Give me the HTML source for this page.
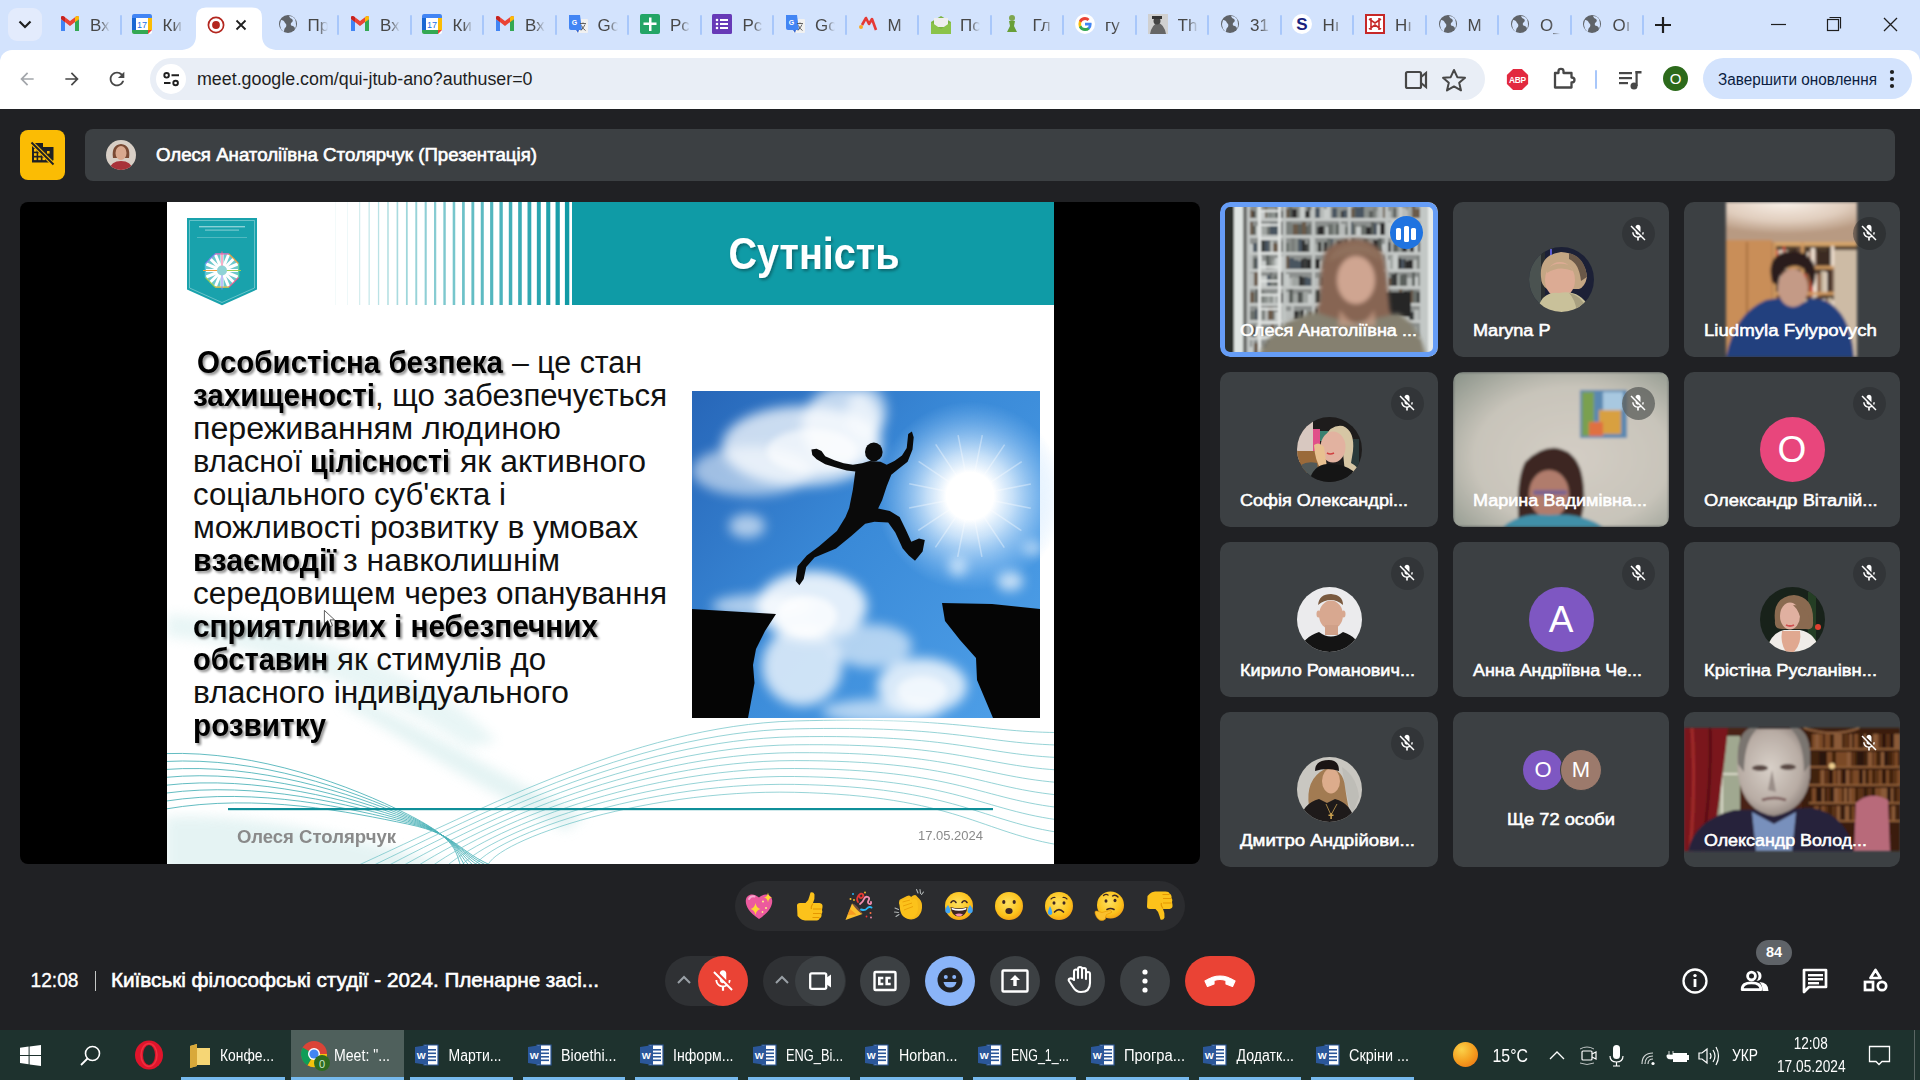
<!DOCTYPE html><html><head><meta charset="utf-8"><style>
*{margin:0;padding:0;box-sizing:border-box}
html,body{width:1920px;height:1080px;overflow:hidden;background:#202124;font-family:"Liberation Sans",sans-serif}
.a{position:absolute}
svg{position:absolute;overflow:visible}
</style></head><body>
<div class="a" style="left:0;top:0;width:1920px;height:64px;background:#d3e3fd"></div>
<div class="a" style="left:8px;top:8px;width:34px;height:33px;border-radius:9px;background:#e3ebfc"></div>
<svg style="left:0;top:0" width="50" height="50"><path d="M19.5 21.5 L25 27 L30.5 21.5" fill="none" stroke="#1f1f1f" stroke-width="2.2"/></svg>
<svg style="left:60px;top:15px" width="20" height="18" viewBox="0 0 20 18"><path d="M1 4 V16 H5 V7 Z" fill="#4285f4"/><path d="M15 7 V16 H19 V4 Z" fill="#34a853"/><path d="M1 4 L10 11 L19 4 L19 2 Q18 0.5 16 1.5 L10 6 L4 1.5 Q2 0.5 1 2 Z" fill="#ea4335"/><path d="M15 7 L19 4 V2 Q18 0.5 16 1.5 L15 2.3Z" fill="#fbbc04"/><path d="M1 4 L5 7 V2.3 L4 1.5 Q2 .5 1 2Z" fill="#c5221f"/></svg>
<div class="a" style="left:90.0px;top:13px;width:20px;height:26px;overflow:hidden;font-size:17px;line-height:26px;color:#474747;-webkit-mask-image:linear-gradient(90deg,#000 50%,transparent);white-space:nowrap">Вх</div>
<svg style="left:132px;top:14px" width="20" height="20" viewBox="0 0 20 20"><rect x="0" y="0" width="20" height="20" rx="2" fill="#fff"/><path d="M0 2 Q0 0 2 0 H18 Q20 0 20 2 V4 H0Z" fill="#4285f4"/><path d="M0 16 H16 V20 H2 Q0 20 0 18Z" fill="#34a853"/><path d="M16 4 H20 V16 H16Z" fill="#fbbc04"/><path d="M16 16 H20 L16 20Z" fill="#ea4335"/><path d="M0 4 H4 V16 H0Z" fill="#1967d2"/><text x="10" y="13.5" font-size="9" text-anchor="middle" fill="#1a73e8" font-family="Liberation Sans">17</text></svg>
<div class="a" style="left:162.5px;top:13px;width:20px;height:26px;overflow:hidden;font-size:17px;line-height:26px;color:#474747;-webkit-mask-image:linear-gradient(90deg,#000 50%,transparent);white-space:nowrap">Ки</div>
<svg style="left:278px;top:14px" width="20" height="20" viewBox="0 0 20 20"><circle cx="10" cy="10" r="9" fill="#5f6368"/><path d="M3 6 Q6 6 7 9 Q9 10 8 13 Q6 14 6 18 Q2 15 2 10Z M11 2 Q12 5 14 5 Q16 7 13 9 Q12 12 15 12 Q17 13 17 15 Q19 11 17 5 Q15 2 11 2Z" fill="#d3e3fd"/></svg>
<div class="a" style="left:307.5px;top:13px;width:20px;height:26px;overflow:hidden;font-size:17px;line-height:26px;color:#474747;-webkit-mask-image:linear-gradient(90deg,#000 50%,transparent);white-space:nowrap">Пр</div>
<svg style="left:350px;top:15px" width="20" height="18" viewBox="0 0 20 18"><path d="M1 4 V16 H5 V7 Z" fill="#4285f4"/><path d="M15 7 V16 H19 V4 Z" fill="#34a853"/><path d="M1 4 L10 11 L19 4 L19 2 Q18 0.5 16 1.5 L10 6 L4 1.5 Q2 0.5 1 2 Z" fill="#ea4335"/><path d="M15 7 L19 4 V2 Q18 0.5 16 1.5 L15 2.3Z" fill="#fbbc04"/><path d="M1 4 L5 7 V2.3 L4 1.5 Q2 .5 1 2Z" fill="#c5221f"/></svg>
<div class="a" style="left:380.0px;top:13px;width:20px;height:26px;overflow:hidden;font-size:17px;line-height:26px;color:#474747;-webkit-mask-image:linear-gradient(90deg,#000 50%,transparent);white-space:nowrap">Вх</div>
<svg style="left:422px;top:14px" width="20" height="20" viewBox="0 0 20 20"><rect x="0" y="0" width="20" height="20" rx="2" fill="#fff"/><path d="M0 2 Q0 0 2 0 H18 Q20 0 20 2 V4 H0Z" fill="#4285f4"/><path d="M0 16 H16 V20 H2 Q0 20 0 18Z" fill="#34a853"/><path d="M16 4 H20 V16 H16Z" fill="#fbbc04"/><path d="M16 16 H20 L16 20Z" fill="#ea4335"/><path d="M0 4 H4 V16 H0Z" fill="#1967d2"/><text x="10" y="13.5" font-size="9" text-anchor="middle" fill="#1a73e8" font-family="Liberation Sans">17</text></svg>
<div class="a" style="left:452.5px;top:13px;width:20px;height:26px;overflow:hidden;font-size:17px;line-height:26px;color:#474747;-webkit-mask-image:linear-gradient(90deg,#000 50%,transparent);white-space:nowrap">Ки</div>
<svg style="left:495px;top:15px" width="20" height="18" viewBox="0 0 20 18"><path d="M1 4 V16 H5 V7 Z" fill="#4285f4"/><path d="M15 7 V16 H19 V4 Z" fill="#34a853"/><path d="M1 4 L10 11 L19 4 L19 2 Q18 0.5 16 1.5 L10 6 L4 1.5 Q2 0.5 1 2 Z" fill="#ea4335"/><path d="M15 7 L19 4 V2 Q18 0.5 16 1.5 L15 2.3Z" fill="#fbbc04"/><path d="M1 4 L5 7 V2.3 L4 1.5 Q2 .5 1 2Z" fill="#c5221f"/></svg>
<div class="a" style="left:525.0px;top:13px;width:20px;height:26px;overflow:hidden;font-size:17px;line-height:26px;color:#474747;-webkit-mask-image:linear-gradient(90deg,#000 50%,transparent);white-space:nowrap">Вх</div>
<svg style="left:568px;top:14px" width="20" height="20" viewBox="0 0 20 20"><rect x="8" y="5" width="12" height="14" rx="1" fill="#f1f1f1"/><path d="M1 1 H12 L14 16 H3 Q1 16 1 14Z" fill="#4285f4"/><path d="M8 16 L10 19 L11 16Z" fill="#3367d6"/><text x="6.5" y="11" font-size="7" font-weight="bold" fill="#fff" text-anchor="middle" font-family="Liberation Sans">G</text><path d="M12 9.5 H18 M15 8.5 V10 M13 16.5 Q16 13 17 10.5 M13.5 11.5 Q15 15 17.5 16.5" stroke="#555" stroke-width="0.9" fill="none"/></svg>
<div class="a" style="left:597.5px;top:13px;width:20px;height:26px;overflow:hidden;font-size:17px;line-height:26px;color:#474747;-webkit-mask-image:linear-gradient(90deg,#000 50%,transparent);white-space:nowrap">Gc</div>
<svg style="left:640px;top:14px" width="20" height="20" viewBox="0 0 20 20"><rect x="0" y="0" width="20" height="20" rx="2" fill="#23a566"/><path d="M9 3.5 H11.5 V8.5 H16.5 V11 H11.5 V17 H9 V11 H3.5 V8.5 H9Z" fill="#fff"/></svg>
<div class="a" style="left:670.0px;top:13px;width:20px;height:26px;overflow:hidden;font-size:17px;line-height:26px;color:#474747;-webkit-mask-image:linear-gradient(90deg,#000 50%,transparent);white-space:nowrap">Pc</div>
<svg style="left:712px;top:14px" width="20" height="20" viewBox="0 0 20 20"><rect x="0" y="0" width="20" height="20" rx="1.5" fill="#673ab7"/><g fill="#fff"><circle cx="5" cy="6" r="1.3"/><circle cx="5" cy="10" r="1.3"/><circle cx="5" cy="14" r="1.3"/><rect x="8" y="5" width="8" height="2"/><rect x="8" y="9" width="8" height="2"/><rect x="8" y="13" width="8" height="2"/></g></svg>
<div class="a" style="left:742.5px;top:13px;width:20px;height:26px;overflow:hidden;font-size:17px;line-height:26px;color:#474747;-webkit-mask-image:linear-gradient(90deg,#000 50%,transparent);white-space:nowrap">Pc</div>
<svg style="left:785px;top:14px" width="20" height="20" viewBox="0 0 20 20"><rect x="8" y="5" width="12" height="14" rx="1" fill="#f1f1f1"/><path d="M1 1 H12 L14 16 H3 Q1 16 1 14Z" fill="#4285f4"/><path d="M8 16 L10 19 L11 16Z" fill="#3367d6"/><text x="6.5" y="11" font-size="7" font-weight="bold" fill="#fff" text-anchor="middle" font-family="Liberation Sans">G</text><path d="M12 9.5 H18 M15 8.5 V10 M13 16.5 Q16 13 17 10.5 M13.5 11.5 Q15 15 17.5 16.5" stroke="#555" stroke-width="0.9" fill="none"/></svg>
<div class="a" style="left:815.0px;top:13px;width:20px;height:26px;overflow:hidden;font-size:17px;line-height:26px;color:#474747;-webkit-mask-image:linear-gradient(90deg,#000 50%,transparent);white-space:nowrap">Gc</div>
<svg style="left:858px;top:14px" width="20" height="20" viewBox="0 0 20 20"><circle cx="3" cy="13" r="2" fill="#f9a825"/><path d="M4 11 L8 4 L11 10 L14 5 L18 16" fill="none" stroke="#e53935" stroke-width="2.6" stroke-linejoin="round"/></svg>
<div class="a" style="left:887.5px;top:13px;width:20px;height:26px;overflow:hidden;font-size:17px;line-height:26px;color:#474747;-webkit-mask-image:linear-gradient(90deg,#000 50%,transparent);white-space:nowrap">M</div>
<svg style="left:930px;top:14px" width="22" height="22" viewBox="0 0 22 22"><path d="M1 8 L11 2 L21 8 V20 H1Z" fill="#7cb342"/><rect x="4" y="4" width="14" height="9" fill="#eee"/><path d="M1 8 L11 15 L21 8 V20 H1Z" fill="#8bc34a"/></svg>
<div class="a" style="left:960.0px;top:13px;width:20px;height:26px;overflow:hidden;font-size:17px;line-height:26px;color:#474747;-webkit-mask-image:linear-gradient(90deg,#000 50%,transparent);white-space:nowrap">Пс</div>
<svg style="left:1002px;top:14px" width="20" height="20" viewBox="0 0 20 20"><circle cx="10" cy="4" r="3" fill="#7fa650"/><path d="M7 7 H13 L12 12 L15 18 H5 L8 12Z" fill="#689f38"/></svg>
<div class="a" style="left:1032.5px;top:13px;width:20px;height:26px;overflow:hidden;font-size:17px;line-height:26px;color:#474747;-webkit-mask-image:linear-gradient(90deg,#000 50%,transparent);white-space:nowrap">Гл</div>
<svg style="left:1075px;top:14px" width="20" height="20" viewBox="0 0 20 20"><circle cx="10" cy="10" r="10" fill="#fff"/><g transform="translate(2.2 2.2) scale(0.78)"><path d="M18.5 10.2 Q18.5 9.3 18.3 8.5 H10 V11.8 H14.8 Q14.5 13.4 13.1 14.4 V16.6 H16 Q18.5 14.3 18.5 10.2Z" fill="#4285f4"/><path d="M10 19 Q13.7 19 16 16.6 L13.1 14.4 Q11.9 15.2 10 15.2 Q6.5 15.2 5.2 11.9 H2.3 V14.2 Q4.6 19 10 19Z" fill="#34a853"/><path d="M5.2 11.9 Q4.8 10 5.2 8.1 V5.8 H2.3 Q0.8 10 2.3 14.2Z" fill="#fbbc05"/><path d="M10 4.8 Q11.8 4.8 13.2 6.1 L15.8 3.5 Q13.5 1 10 1 Q4.6 1 2.3 5.8 L5.2 8.1 Q6.5 4.8 10 4.8Z" fill="#ea4335"/></g></svg>
<div class="a" style="left:1105.0px;top:13px;width:20px;height:26px;overflow:hidden;font-size:17px;line-height:26px;color:#474747;-webkit-mask-image:linear-gradient(90deg,#000 50%,transparent);white-space:nowrap">гу</div>
<svg style="left:1148px;top:14px" width="20" height="20" viewBox="0 0 20 20"><rect width="20" height="20" fill="#d0d0d0"/><path d="M2 20 Q4 10 10 9 Q16 10 18 20Z" fill="#666"/><circle cx="9" cy="7" r="3.5" fill="#444"/><rect x="4" y="2" width="10" height="3" fill="#333"/></svg>
<div class="a" style="left:1177.5px;top:13px;width:20px;height:26px;overflow:hidden;font-size:17px;line-height:26px;color:#474747;-webkit-mask-image:linear-gradient(90deg,#000 50%,transparent);white-space:nowrap">Th</div>
<svg style="left:1220px;top:14px" width="20" height="20" viewBox="0 0 20 20"><circle cx="10" cy="10" r="9" fill="#5f6368"/><path d="M3 6 Q6 6 7 9 Q9 10 8 13 Q6 14 6 18 Q2 15 2 10Z M11 2 Q12 5 14 5 Q16 7 13 9 Q12 12 15 12 Q17 13 17 15 Q19 11 17 5 Q15 2 11 2Z" fill="#d3e3fd"/></svg>
<div class="a" style="left:1250.0px;top:13px;width:20px;height:26px;overflow:hidden;font-size:17px;line-height:26px;color:#474747;-webkit-mask-image:linear-gradient(90deg,#000 50%,transparent);white-space:nowrap">31</div>
<svg style="left:1292px;top:14px" width="20" height="20" viewBox="0 0 20 20"><circle cx="10" cy="10" r="10" fill="#fff"/><text x="10" y="16" font-size="17" font-weight="bold" fill="#1a237e" text-anchor="middle" font-family="Liberation Sans">S</text></svg>
<div class="a" style="left:1322.5px;top:13px;width:20px;height:26px;overflow:hidden;font-size:17px;line-height:26px;color:#474747;-webkit-mask-image:linear-gradient(90deg,#000 50%,transparent);white-space:nowrap">Hı</div>
<svg style="left:1365px;top:14px" width="20" height="20" viewBox="0 0 20 20"><rect width="20" height="20" fill="#c62828"/><rect x="2" y="2" width="16" height="16" fill="#fff"/><path d="M4 5 L10 9 L16 5 M4 15 L10 11 L16 15 M6 4 V16 M14 4 V16" stroke="#c62828" stroke-width="1.6" fill="none"/></svg>
<div class="a" style="left:1395.0px;top:13px;width:20px;height:26px;overflow:hidden;font-size:17px;line-height:26px;color:#474747;-webkit-mask-image:linear-gradient(90deg,#000 50%,transparent);white-space:nowrap">Hı</div>
<svg style="left:1438px;top:14px" width="20" height="20" viewBox="0 0 20 20"><circle cx="10" cy="10" r="9" fill="#5f6368"/><path d="M3 6 Q6 6 7 9 Q9 10 8 13 Q6 14 6 18 Q2 15 2 10Z M11 2 Q12 5 14 5 Q16 7 13 9 Q12 12 15 12 Q17 13 17 15 Q19 11 17 5 Q15 2 11 2Z" fill="#d3e3fd"/></svg>
<div class="a" style="left:1467.5px;top:13px;width:20px;height:26px;overflow:hidden;font-size:17px;line-height:26px;color:#474747;-webkit-mask-image:linear-gradient(90deg,#000 50%,transparent);white-space:nowrap">M</div>
<svg style="left:1510px;top:14px" width="20" height="20" viewBox="0 0 20 20"><circle cx="10" cy="10" r="9" fill="#5f6368"/><path d="M3 6 Q6 6 7 9 Q9 10 8 13 Q6 14 6 18 Q2 15 2 10Z M11 2 Q12 5 14 5 Q16 7 13 9 Q12 12 15 12 Q17 13 17 15 Q19 11 17 5 Q15 2 11 2Z" fill="#d3e3fd"/></svg>
<div class="a" style="left:1540.0px;top:13px;width:20px;height:26px;overflow:hidden;font-size:17px;line-height:26px;color:#474747;-webkit-mask-image:linear-gradient(90deg,#000 50%,transparent);white-space:nowrap">O_</div>
<svg style="left:1582px;top:14px" width="20" height="20" viewBox="0 0 20 20"><circle cx="10" cy="10" r="9" fill="#5f6368"/><path d="M3 6 Q6 6 7 9 Q9 10 8 13 Q6 14 6 18 Q2 15 2 10Z M11 2 Q12 5 14 5 Q16 7 13 9 Q12 12 15 12 Q17 13 17 15 Q19 11 17 5 Q15 2 11 2Z" fill="#d3e3fd"/></svg>
<div class="a" style="left:1612.5px;top:13px;width:20px;height:26px;overflow:hidden;font-size:17px;line-height:26px;color:#474747;-webkit-mask-image:linear-gradient(90deg,#000 50%,transparent);white-space:nowrap">Oı</div>
<div class="a" style="left:119.5px;top:15px;width:2px;height:20px;border-radius:1px;background:#a8c7fa"></div>
<div class="a" style="left:337.0px;top:15px;width:2px;height:20px;border-radius:1px;background:#a8c7fa"></div>
<div class="a" style="left:409.5px;top:15px;width:2px;height:20px;border-radius:1px;background:#a8c7fa"></div>
<div class="a" style="left:482.0px;top:15px;width:2px;height:20px;border-radius:1px;background:#a8c7fa"></div>
<div class="a" style="left:554.5px;top:15px;width:2px;height:20px;border-radius:1px;background:#a8c7fa"></div>
<div class="a" style="left:627.0px;top:15px;width:2px;height:20px;border-radius:1px;background:#a8c7fa"></div>
<div class="a" style="left:699.5px;top:15px;width:2px;height:20px;border-radius:1px;background:#a8c7fa"></div>
<div class="a" style="left:772.0px;top:15px;width:2px;height:20px;border-radius:1px;background:#a8c7fa"></div>
<div class="a" style="left:844.5px;top:15px;width:2px;height:20px;border-radius:1px;background:#a8c7fa"></div>
<div class="a" style="left:917.0px;top:15px;width:2px;height:20px;border-radius:1px;background:#a8c7fa"></div>
<div class="a" style="left:989.5px;top:15px;width:2px;height:20px;border-radius:1px;background:#a8c7fa"></div>
<div class="a" style="left:1062.0px;top:15px;width:2px;height:20px;border-radius:1px;background:#a8c7fa"></div>
<div class="a" style="left:1134.5px;top:15px;width:2px;height:20px;border-radius:1px;background:#a8c7fa"></div>
<div class="a" style="left:1207.0px;top:15px;width:2px;height:20px;border-radius:1px;background:#a8c7fa"></div>
<div class="a" style="left:1279.5px;top:15px;width:2px;height:20px;border-radius:1px;background:#a8c7fa"></div>
<div class="a" style="left:1352.0px;top:15px;width:2px;height:20px;border-radius:1px;background:#a8c7fa"></div>
<div class="a" style="left:1424.5px;top:15px;width:2px;height:20px;border-radius:1px;background:#a8c7fa"></div>
<div class="a" style="left:1497.0px;top:15px;width:2px;height:20px;border-radius:1px;background:#a8c7fa"></div>
<div class="a" style="left:1569.5px;top:15px;width:2px;height:20px;border-radius:1px;background:#a8c7fa"></div>
<div class="a" style="left:1642.0px;top:15px;width:2px;height:20px;border-radius:1px;background:#a8c7fa"></div>
<svg style="left:180px;top:0" width="100" height="52"><path d="M-4 50.5 Q16 50.5 16 36 V18 Q16 7.5 26 7.5 H72 Q82 7.5 82 18 V36 Q82 50.5 102 50.5Z" fill="#fff"/></svg>
<svg style="left:205px;top:14px" width="22" height="22" viewBox="0 0 22 22"><circle cx="11" cy="11" r="7.6" fill="none" stroke="#b3261e" stroke-width="1.7"/><circle cx="11" cy="11" r="3.9" fill="#b3261e"/></svg>
<svg style="left:233px;top:17px" width="16" height="16" viewBox="0 0 16 16"><path d="M3.5 3.5 L12.5 12.5 M12.5 3.5 L3.5 12.5" stroke="#1f1f1f" stroke-width="1.8"/></svg>
<svg style="left:1653px;top:15px" width="20" height="20"><path d="M10 2 V18 M2 10 H18" stroke="#1f1f1f" stroke-width="2.2"/></svg>
<svg style="left:1765px;top:10px" width="140" height="30"><path d="M6 14.5 H21" stroke="#1f1f1f" stroke-width="1.2"/><rect x="62.5" y="9.5" width="11" height="11" fill="none" stroke="#1f1f1f" stroke-width="1.2"/><path d="M64.5 7.5 H75.5 V18.5" fill="none" stroke="#1f1f1f" stroke-width="1.2"/><path d="M119 8 L132 21 M132 8 L119 21" stroke="#1f1f1f" stroke-width="1.3"/></svg>
<div class="a" style="left:0;top:50px;width:1920px;height:59px;background:#fff;border-radius:12px 12px 0 0"></div>
<div class="a" style="left:0;top:62px;width:1920px;height:47px;background:#fff"></div>
<svg style="left:17px;top:69px" width="20" height="20" viewBox="0 0 24 24"><path d="M20 11H7.83l5.59-5.59L12 4l-8 8 8 8 1.41-1.41L7.83 13H20v-2z" fill="#a3a6ab"/></svg><svg style="left:62px;top:69px" width="20" height="20" viewBox="0 0 24 24"><path d="M12 4l-1.41 1.41L16.17 11H4v2h12.17l-5.58 5.59L12 20l8-8z" fill="#474747"/></svg><svg style="left:106px;top:68px" width="22" height="22" viewBox="0 0 24 24"><path d="M17.65 6.35C16.2 4.9 14.21 4 12 4c-4.42 0-7.99 3.58-7.99 8s3.57 8 7.99 8c3.73 0 6.84-2.55 7.73-6h-2.08c-.82 2.330-3.04 4-5.65 4-3.31 0-6-2.69-6-6s2.69-6 6-6c1.66 0 3.14.69 4.22 1.78L13 11h7V4l-2.35 2.35z" fill="#474747"/></svg>
<div class="a" style="left:150px;top:58px;width:1335px;height:42px;border-radius:21px;background:#e9eef6"></div>
<div class="a" style="left:156px;top:64px;width:30px;height:30px;border-radius:15px;background:#fff"></div>
<svg style="left:160px;top:69px" width="24" height="20" viewBox="0 0 24 20"><g fill="none" stroke="#1f1f1f" stroke-width="1.9"><path d="M11.5 6.3 H19 M4 14 H10.5"/><circle cx="6.6" cy="6.3" r="2.3"/><circle cx="15.6" cy="14" r="2.3"/></g></svg>
<svg style="left:197px;top:66px" width="360" height="28"><text x="0" y="19" font-size="17.6" fill="#1f1f1f" textLength="335.5" lengthAdjust="spacingAndGlyphs">meet.google.com/qui-jtub-ano?authuser=0</text></svg>
<svg style="left:1400px;top:66px" width="300" height="28"><g fill="none" stroke="#474747" stroke-width="2.2"><rect x="6" y="6" width="15" height="16" rx="1.5"/><path d="M21 11 L26 7 V21 L21 17"/></g><path d="M54 4 L57.3 11.2 L65 11.8 L59.2 16.8 L61 24.4 L54 20.4 L47 24.4 L48.8 16.8 L43 11.8 L50.7 11.2Z" fill="none" stroke="#474747" stroke-width="2" stroke-linejoin="round"/></svg>
<svg style="left:1506px;top:68px" width="23" height="23" viewBox="0 0 26 26"><path d="M8 1 H18 L25 8 V18 L18 25 H8 L1 18 V8Z" fill="#e2293f"/><text x="13" y="17" font-size="9.5" font-weight="bold" fill="#fff" text-anchor="middle" font-family="Liberation Sans" letter-spacing="-0.3">ABP</text></svg>
<svg style="left:1551px;top:66px" width="28" height="26" viewBox="0 0 28 26"><path d="M4 7 H7.5 V5 Q7.5 2.8 10 2.8 Q12.5 2.8 12.5 5 V7 H20.5 V11.5 Q23.5 11.5 23.5 14 Q23.5 16.5 20.5 16.5 V21.5 H4Z" fill="none" stroke="#474747" stroke-width="2.3" stroke-linejoin="round"/></svg>
<div class="a" style="left:1595px;top:70px;width:2px;height:19px;background:#a8c7fa;border-radius:1px"></div>
<svg style="left:1617px;top:68px" width="26" height="24" viewBox="0 0 26 24"><g fill="#474747"><rect x="2" y="4" width="13" height="2.2"/><rect x="2" y="9" width="13" height="2.2"/><rect x="2" y="14" width="9" height="2.2"/><circle cx="17" cy="18" r="3.5"/><rect x="18.5" y="3" width="2.2" height="15"/><rect x="18.5" y="3" width="6" height="2.5"/></g></svg>
<div class="a" style="left:1663px;top:66px;width:25px;height:25px;border-radius:50%;background:#2c6a1b;color:#fff;font-size:15px;line-height:25px;text-align:center">O</div>
<div class="a" style="left:1703px;top:58px;width:209px;height:41px;border-radius:21px;background:#d3e3fd"></div>
<svg style="left:1718px;top:66px" width="170" height="26"><text x="0" y="18.5" font-size="16" fill="#0b1d3f" textLength="159" lengthAdjust="spacingAndGlyphs">Завершити оновлення</text></svg>
<svg style="left:1886px;top:66px" width="12" height="26"><circle cx="6" cy="6" r="2.1" fill="#1f1f1f"/><circle cx="6" cy="13" r="2.1" fill="#1f1f1f"/><circle cx="6" cy="20" r="2.1" fill="#1f1f1f"/></svg>
<div class="a" style="left:20px;top:130px;width:45px;height:50px;border-radius:8px;background:#fbbc04"></div>
<svg style="left:30px;top:141px" width="26" height="26" viewBox="0 0 26 26"><path d="M2 2 H13 V6 H23.5 V19 L21 21.5 H2Z" fill="#202124"/><g fill="#fbbc04"><rect x="4" y="8" width="2.6" height="2.6"/><rect x="8.2" y="8" width="2.6" height="2.6"/><rect x="4" y="12.2" width="2.6" height="2.6"/><rect x="8.2" y="12.2" width="2.6" height="2.6"/><rect x="12.5" y="12.2" width="2.6" height="2.6"/><rect x="4" y="16.5" width="2.6" height="2.6"/><rect x="8.2" y="16.5" width="2.6" height="2.6"/><rect x="12.5" y="16.5" width="2.6" height="2.6"/><rect x="17" y="10" width="2.6" height="2.6"/></g><path d="M1 1 L24 24" stroke="#fbbc04" stroke-width="4"/><path d="M1.5 1.5 L23.5 23.5" stroke="#202124" stroke-width="1.9"/></svg>
<div class="a" style="left:85px;top:129px;width:1810px;height:52px;border-radius:8px;background:#3c4043"></div>
<svg style="left:106px;top:140px" width="30" height="30" viewBox="0 0 30 30"><defs><clipPath id="hav"><circle cx="15" cy="15" r="15"/></clipPath></defs><g clip-path="url(#hav)"><rect width="30" height="30" fill="#d8cfc6"/><path d="M7 18 Q5 5 15 4 Q25 5 23 18 Z" fill="#7a4a34"/><ellipse cx="15" cy="13" rx="5.5" ry="7" fill="#d9a88e"/><path d="M3 30 Q5 21 15 21 Q25 21 27 30Z" fill="#a8323a"/></g></svg>
<svg style="left:156px;top:143px" width="400" height="26"><text x="0" y="18" font-size="17.6" fill="#fff" stroke="#fff" stroke-width="0.6" textLength="381" lengthAdjust="spacingAndGlyphs">Олеся Анатоліївна Столярчук (Презентація)</text></svg>
<div class="a" style="left:20px;top:202px;width:1180px;height:662px;border-radius:8px;background:#000"></div>
<svg style="left:167px;top:202px;overflow:hidden" width="887" height="662" viewBox="0 0 887 662">
<defs>
<filter id="ds" x="-5%" y="-20%" width="115%" height="150%"><feDropShadow dx="2" dy="2.2" stdDeviation="1.3" flood-color="#000" flood-opacity="0.42"/></filter>
<filter id="ds2" x="-5%" y="-20%" width="115%" height="150%"><feDropShadow dx="1.5" dy="2" stdDeviation="1.5" flood-color="#000" flood-opacity="0.35"/></filter>
<filter id="blur6"><feGaussianBlur stdDeviation="6"/></filter>
<filter id="blur3"><feGaussianBlur stdDeviation="3"/></filter>
<filter id="blur1"><feGaussianBlur stdDeviation="0.8"/></filter>
<linearGradient id="sky" x1="0" y1="0" x2="1" y2="0.8"><stop offset="0" stop-color="#2766b8"/><stop offset="0.5" stop-color="#3a8ad8"/><stop offset="1" stop-color="#4c9de6"/></linearGradient>
<radialGradient id="sun"><stop offset="0" stop-color="#fff"/><stop offset="0.25" stop-color="#fff"/><stop offset="0.45" stop-color="#e8f4ff" stop-opacity="0.8"/><stop offset="1" stop-color="#9fd0ff" stop-opacity="0"/></radialGradient>
<linearGradient id="swoosh" x1="0" y1="0" x2="1" y2="0"><stop offset="0" stop-color="#bfe3e3" stop-opacity="0.9"/><stop offset="1" stop-color="#dff1f1" stop-opacity="0.2"/></linearGradient>
<linearGradient id="botfade" x1="0" y1="0" x2="0" y2="1"><stop offset="0" stop-color="#e6f4f4" stop-opacity="0"/><stop offset="1" stop-color="#cfe9ea" stop-opacity="0.9"/></linearGradient>
</defs>
<rect width="887" height="662" fill="#fff"/>
<path d="M-2.0 614.6 C91.2 609.9 207.8 637.9 301.0 670.5 L-2.0 670.5 Z" fill="#dff1f1" opacity="0.8" filter="url(#blur6)"/>
<path d="M184.5 493.3 C240.4 516.6 324.3 567.9 417.6 614.6 L398.9 628.5 C301.0 581.9 221.8 526.0 175.2 502.7 Z" fill="#cfeaea" opacity="0.55" filter="url(#blur6)"/>
<path d="M0 412 Q120 420 230 470 Q300 505 330 540 L300 545 Q250 510 150 470 Q70 440 0 435Z" fill="#cdeaea" opacity="0.45" filter="url(#blur6)"/>
<path d="M-2.0 551.6 C91.2 548.3 184.5 584.2 240.4 612.2 S287.0 651.8 296.4 670.5" fill="none" stroke="#48b0b6" stroke-width="1" opacity="0.85"/><path d="M-2.0 559.5 C91.2 554.4 184.5 588.0 240.4 613.6 S287.0 651.8 302.9 670.5" fill="none" stroke="#48b0b6" stroke-width="1" opacity="0.85"/><path d="M-2.0 567.5 C91.2 560.5 184.5 591.7 240.4 615.0 S287.0 651.8 309.4 670.5" fill="none" stroke="#48b0b6" stroke-width="1" opacity="0.85"/><path d="M-2.0 575.4 C91.2 566.5 184.5 595.4 240.4 616.4 S287.0 651.8 315.9 670.5" fill="none" stroke="#48b0b6" stroke-width="1" opacity="0.85"/><path d="M-2.0 583.3 C91.2 572.6 184.5 599.2 240.4 617.8 S287.0 651.8 322.5 670.5" fill="none" stroke="#48b0b6" stroke-width="1" opacity="0.85"/><path d="M-2.0 591.2 C91.2 578.7 184.5 602.9 240.4 619.2 S287.0 651.8 329.0 670.5" fill="none" stroke="#48b0b6" stroke-width="1" opacity="0.85"/><path d="M-2.0 599.2 C91.2 584.7 184.5 606.6 240.4 620.6 S287.0 651.8 335.5 670.5" fill="none" stroke="#48b0b6" stroke-width="1" opacity="0.85"/><path d="M-2.0 607.1 C91.2 590.8 184.5 610.4 240.4 622.0 S287.0 651.8 342.1 670.5" fill="none" stroke="#48b0b6" stroke-width="1" opacity="0.85"/><path d="M175.2 670.5 C301.0 614.6 464.2 523.6 627.4 519.0 S813.9 530.6 897.8 530.6" fill="none" stroke="#6cc2c6" stroke-width="0.9" opacity="0.8"/><path d="M191.5 670.5 C301.0 618.3 464.2 530.6 627.4 526.9 S813.9 541.8 897.8 543.2" fill="none" stroke="#6cc2c6" stroke-width="0.9" opacity="0.8"/><path d="M207.8 670.5 C301.0 622.0 464.2 537.6 627.4 534.8 S813.9 553.0 897.8 555.8" fill="none" stroke="#6cc2c6" stroke-width="0.9" opacity="0.8"/><path d="M224.1 670.5 C301.0 625.7 464.2 544.6 627.4 542.8 S813.9 564.2 897.8 568.4" fill="none" stroke="#6cc2c6" stroke-width="0.9" opacity="0.8"/><path d="M240.4 670.5 C301.0 629.5 464.2 551.6 627.4 550.7 S813.9 575.4 897.8 581.0" fill="none" stroke="#6cc2c6" stroke-width="0.9" opacity="0.8"/><path d="M256.7 670.5 C301.0 633.2 464.2 558.6 627.4 558.6 S813.9 586.6 897.8 593.6" fill="none" stroke="#6cc2c6" stroke-width="0.9" opacity="0.8"/><path d="M273.1 670.5 C301.0 636.9 464.2 565.6 627.4 566.5 S813.9 597.8 897.8 606.2" fill="none" stroke="#6cc2c6" stroke-width="0.9" opacity="0.8"/><path d="M289.4 670.5 C301.0 640.7 464.2 572.6 627.4 574.5 S813.9 609.0 897.8 618.7" fill="none" stroke="#6cc2c6" stroke-width="0.9" opacity="0.8"/><path d="M305.7 670.5 C301.0 644.4 464.2 579.6 627.4 582.4 S813.9 620.1 897.8 631.3" fill="none" stroke="#6cc2c6" stroke-width="0.9" opacity="0.8"/><path d="M322.0 670.5 C301.0 648.1 464.2 586.6 627.4 590.3 S813.9 631.3 897.8 643.9" fill="none" stroke="#6cc2c6" stroke-width="0.9" opacity="0.8"/>
<rect x="192.20" y="0" width="1.00" height="103" fill="#109aa5" opacity="0.22"/><rect x="201.55" y="0" width="1.16" height="103" fill="#109aa5" opacity="0.26"/><rect x="210.90" y="0" width="1.31" height="103" fill="#109aa5" opacity="0.29"/><rect x="220.25" y="0" width="1.46" height="103" fill="#109aa5" opacity="0.33"/><rect x="229.60" y="0" width="1.62" height="103" fill="#109aa5" opacity="0.36"/><rect x="238.95" y="0" width="1.77" height="103" fill="#109aa5" opacity="0.40"/><rect x="248.30" y="0" width="1.93" height="103" fill="#109aa5" opacity="0.43"/><rect x="257.65" y="0" width="2.08" height="103" fill="#109aa5" opacity="0.47"/><rect x="267.00" y="0" width="2.24" height="103" fill="#109aa5" opacity="0.50"/><rect x="276.35" y="0" width="2.40" height="103" fill="#109aa5" opacity="0.54"/><rect x="285.70" y="0" width="2.55" height="103" fill="#109aa5" opacity="0.57"/><rect x="295.05" y="0" width="2.71" height="103" fill="#109aa5" opacity="0.61"/><rect x="304.40" y="0" width="2.86" height="103" fill="#109aa5" opacity="0.65"/><rect x="313.75" y="0" width="3.02" height="103" fill="#109aa5" opacity="0.68"/><rect x="323.10" y="0" width="3.17" height="103" fill="#109aa5" opacity="0.72"/><rect x="332.45" y="0" width="3.33" height="103" fill="#109aa5" opacity="0.75"/><rect x="341.80" y="0" width="3.48" height="103" fill="#109aa5" opacity="0.79"/><rect x="351.15" y="0" width="3.63" height="103" fill="#109aa5" opacity="0.82"/><rect x="360.50" y="0" width="3.79" height="103" fill="#109aa5" opacity="0.86"/><rect x="369.85" y="0" width="3.94" height="103" fill="#109aa5" opacity="0.89"/><rect x="379.20" y="0" width="4.10" height="103" fill="#109aa5" opacity="0.93"/><rect x="388.55" y="0" width="4.25" height="103" fill="#109aa5" opacity="0.96"/><rect x="397.90" y="0" width="4.41" height="103" fill="#109aa5" opacity="1.00"/><rect x="168" y="0" width="1" height="103" fill="#109aa5" opacity="0.05"/><rect x="180" y="0" width="1" height="103" fill="#109aa5" opacity="0.07"/>
<rect x="405" y="0" width="482" height="103" fill="#0f9ba6"/>
<text x="647" y="67" font-size="45" font-weight="bold" fill="#fff" text-anchor="middle" textLength="171" lengthAdjust="spacingAndGlyphs" filter="url(#ds2)">Сутність</text>
<path d="M20 16 H90 V87.5 L55 103.3 L20 87.5Z" fill="#19a2ac"/>
<path d="M22.5 18.5 H87.5 V86 L55 100.5 L22.5 86Z" fill="none" stroke="#bfe6e8" stroke-width="0.6" opacity="0.8"/>
<rect x="32" y="24" width="46" height="1.4" fill="#d6f0f1" opacity="0.6"/><rect x="38" y="27.5" width="34" height="1.2" fill="#d6f0f1" opacity="0.5"/><rect x="30" y="35.5" width="50" height="0.5" fill="#d6f0f1" opacity="0.6"/>
<polygon points="71.6,75.4 61.9,85.1 48.1,85.1 38.4,75.4 38.4,61.6 48.1,51.9 61.9,51.9 71.6,61.6" fill="#6cc8cc"/>
<line x1="55" y1="68.5" x2="72.0" y2="68.5" stroke="#fff" stroke-width="3"/><line x1="55" y1="68.5" x2="70.7" y2="75.0" stroke="#fff" stroke-width="3"/><line x1="55" y1="68.5" x2="67.0" y2="80.5" stroke="#fff" stroke-width="3"/><line x1="55" y1="68.5" x2="61.5" y2="84.2" stroke="#fff" stroke-width="3"/><line x1="55" y1="68.5" x2="55.0" y2="85.5" stroke="#fff" stroke-width="3"/><line x1="55" y1="68.5" x2="48.5" y2="84.2" stroke="#fff" stroke-width="3"/><line x1="55" y1="68.5" x2="43.0" y2="80.5" stroke="#fff" stroke-width="3"/><line x1="55" y1="68.5" x2="39.3" y2="75.0" stroke="#fff" stroke-width="3"/><line x1="55" y1="68.5" x2="38.0" y2="68.5" stroke="#fff" stroke-width="3"/><line x1="55" y1="68.5" x2="39.3" y2="62.0" stroke="#fff" stroke-width="3"/><line x1="55" y1="68.5" x2="43.0" y2="56.5" stroke="#fff" stroke-width="3"/><line x1="55" y1="68.5" x2="48.5" y2="52.8" stroke="#fff" stroke-width="3"/><line x1="55" y1="68.5" x2="55.0" y2="51.5" stroke="#fff" stroke-width="3"/><line x1="55" y1="68.5" x2="61.5" y2="52.8" stroke="#fff" stroke-width="3"/><line x1="55" y1="68.5" x2="67.0" y2="56.5" stroke="#fff" stroke-width="3"/><line x1="55" y1="68.5" x2="70.7" y2="62.0" stroke="#fff" stroke-width="3"/>
<line x1="71.6" y1="75.4" x2="61.9" y2="85.1" stroke="#f06090" stroke-width="1.3"/>
<line x1="61.9" y1="85.1" x2="48.1" y2="85.1" stroke="#f0c040" stroke-width="1.3"/>
<line x1="48.1" y1="85.1" x2="38.4" y2="75.4" stroke="#a0d050" stroke-width="1.3"/>
<line x1="38.4" y1="75.4" x2="38.4" y2="61.6" stroke="#50c0e0" stroke-width="1.3"/>
<line x1="38.4" y1="61.6" x2="48.1" y2="51.9" stroke="#8080f0" stroke-width="1.3"/>
<line x1="48.1" y1="51.9" x2="61.9" y2="51.9" stroke="#e070c0" stroke-width="1.3"/>
<line x1="61.9" y1="51.9" x2="71.6" y2="61.6" stroke="#f0a040" stroke-width="1.3"/>
<line x1="71.6" y1="61.6" x2="71.6" y2="75.4" stroke="#60d0a0" stroke-width="1.3"/>
<line x1="55" y1="68.5" x2="55.0" y2="49.5" stroke="#f06090" stroke-width="1"/>
<line x1="55" y1="68.5" x2="74.0" y2="68.5" stroke="#a0d050" stroke-width="1"/>
<line x1="55" y1="68.5" x2="55.0" y2="87.5" stroke="#8080f0" stroke-width="1"/>
<line x1="55" y1="68.5" x2="36.0" y2="68.5" stroke="#f0a040" stroke-width="1"/>
<circle cx="55" cy="68.5" r="5" fill="#8fd3d6"/>
<text x="30" y="170.8" font-size="31" font-weight="bold" fill="#000" textLength="306" lengthAdjust="spacingAndGlyphs" filter="url(#ds)">Особистісна безпека</text><text x="345" y="170.8" font-size="31" fill="#111" textLength="130" lengthAdjust="spacingAndGlyphs">– це стан</text><text x="26" y="203.6" font-size="31" font-weight="bold" fill="#000" textLength="182" lengthAdjust="spacingAndGlyphs" filter="url(#ds)">захищеності</text><text x="208" y="203.6" font-size="31" fill="#111" textLength="292" lengthAdjust="spacingAndGlyphs">, що забезпечується</text><text x="26" y="236.5" font-size="31" fill="#111" textLength="368" lengthAdjust="spacingAndGlyphs">переживанням людиною</text><text x="26" y="269.5" font-size="31" fill="#111" textLength="109" lengthAdjust="spacingAndGlyphs">власної</text><text x="143" y="269.5" font-size="31" font-weight="bold" fill="#000" textLength="140" lengthAdjust="spacingAndGlyphs" filter="url(#ds)">цілісності</text><text x="293" y="269.5" font-size="31" fill="#111" textLength="186" lengthAdjust="spacingAndGlyphs">як активного</text><text x="26" y="302.5" font-size="31" fill="#111" textLength="313" lengthAdjust="spacingAndGlyphs">соціального суб'єкта і</text><text x="26" y="335.5" font-size="31" fill="#111" textLength="445" lengthAdjust="spacingAndGlyphs">можливості розвитку в умовах</text><text x="26" y="368.7" font-size="31" font-weight="bold" fill="#000" textLength="143" lengthAdjust="spacingAndGlyphs" filter="url(#ds)">взаємодії</text><text x="176" y="368.7" font-size="31" fill="#111" textLength="217" lengthAdjust="spacingAndGlyphs">з навколишнім</text><text x="26" y="401.8" font-size="31" fill="#111" textLength="474" lengthAdjust="spacingAndGlyphs">середовищем через опанування</text><text x="26" y="434.9" font-size="31" font-weight="bold" fill="#000" textLength="405" lengthAdjust="spacingAndGlyphs" filter="url(#ds)">сприятливих і небезпечних</text><text x="26" y="468.0" font-size="31" font-weight="bold" fill="#000" textLength="135" lengthAdjust="spacingAndGlyphs" filter="url(#ds)">обставин</text><text x="170" y="468.0" font-size="31" fill="#111" textLength="209" lengthAdjust="spacingAndGlyphs">як стимулів до</text><text x="26" y="501.1" font-size="31" fill="#111" textLength="376" lengthAdjust="spacingAndGlyphs">власного індивідуального</text><text x="26" y="534.2" font-size="31" font-weight="bold" fill="#000" textLength="133" lengthAdjust="spacingAndGlyphs" filter="url(#ds)">розвитку</text>
<g transform="translate(525,189)">
<rect width="348" height="327" fill="url(#sky)"/>
<g filter="url(#blur6)" fill="#fff"><ellipse cx="110" cy="55" rx="80" ry="40" opacity="0.75"/><ellipse cx="60" cy="80" rx="60" ry="25" opacity="0.55"/><ellipse cx="150" cy="35" rx="40" ry="40" opacity="0.7"/><ellipse cx="175" cy="20" rx="20" ry="25" opacity="0.6"/><ellipse cx="55" cy="135" rx="18" ry="12" opacity="0.6"/><ellipse cx="120" cy="215" rx="55" ry="35" opacity="0.85"/><ellipse cx="70" cy="215" rx="50" ry="12" opacity="0.6"/><ellipse cx="110" cy="275" rx="40" ry="40" opacity="0.75"/><ellipse cx="180" cy="255" rx="40" ry="22" opacity="0.6"/><ellipse cx="230" cy="295" rx="45" ry="28" opacity="0.8"/><ellipse cx="190" cy="320" rx="60" ry="12" opacity="0.6"/><ellipse cx="266" cy="175" rx="9" ry="10" opacity="0.7"/><ellipse cx="318" cy="190" rx="13" ry="10" opacity="0.7"/><ellipse cx="340" cy="157" rx="10" ry="7" opacity="0.6"/></g>
<g filter="url(#blur3)" fill="#fff"><ellipse cx="120" cy="60" rx="45" ry="22" opacity="0.6"/><ellipse cx="115" cy="225" rx="30" ry="20" opacity="0.7"/><ellipse cx="230" cy="300" rx="25" ry="15" opacity="0.6"/></g>
<circle cx="278" cy="105" r="95" fill="url(#sun)"/>
<g stroke="#fff" stroke-width="1.5" opacity="0.35"><line x1="292.7" y1="108.0" x2="338.8" y2="117.3"/><line x1="290.4" y1="113.4" x2="329.4" y2="139.6"/><line x1="286.3" y1="117.5" x2="312.3" y2="156.7"/><line x1="280.9" y1="119.7" x2="289.9" y2="165.9"/><line x1="275.0" y1="119.7" x2="265.7" y2="165.8"/><line x1="269.6" y1="117.4" x2="243.4" y2="156.4"/><line x1="265.5" y1="113.3" x2="226.3" y2="139.3"/><line x1="263.3" y1="107.9" x2="217.1" y2="116.9"/><line x1="263.3" y1="102.0" x2="217.2" y2="92.7"/><line x1="265.6" y1="96.6" x2="226.6" y2="70.4"/><line x1="269.7" y1="92.5" x2="243.7" y2="53.3"/><line x1="275.1" y1="90.3" x2="266.1" y2="44.1"/><line x1="281.0" y1="90.3" x2="290.3" y2="44.2"/><line x1="286.4" y1="92.6" x2="312.6" y2="53.6"/><line x1="290.5" y1="96.7" x2="329.7" y2="70.7"/><line x1="292.7" y1="102.1" x2="338.9" y2="93.1"/></g>
<circle cx="278" cy="105" r="22" fill="#fff"/>
<g fill="#0a0a0a"><ellipse cx="181.8" cy="60.9" rx="8.8" ry="9.5"/><path d="M119.4 58.5 L124.6 57.8 L129.5 60.0 L133.2 65.2 L142.4 69.2 L151.7 72.3 L160.9 73.8 L170.1 72.3 L177.8 70.1 L188.5 70.8 L194.7 73.8 L202.4 70.1 L210.0 64.6 L214.7 56.9 L216.2 43.1 L219.9 40.6 L221.7 46.2 L220.5 58.5 L215.6 70.8 L207.0 77.5 L199.3 83.7 L194.7 95.3 L190.1 109.2 L186.1 117.5 L197.8 119.9 L207.6 126.1 L213.7 138.4 L219.3 150.7 L227.0 147.6 L232.8 149.1 L230.6 160.5 L223.0 169.7 L216.8 164.5 L210.7 157.4 L203.3 141.4 L196.2 131.6 L182.4 130.7 L173.2 132.8 L159.3 145.1 L144.0 157.4 L122.5 166.6 L114.2 175.9 L111.7 188.1 L107.4 194.3 L103.7 190.0 L105.6 175.2 L114.8 164.5 L127.1 155.3 L144.9 139.9 L153.5 126.1 L157.2 116.9 L160.9 98.4 L163.3 80.6 L154.7 79.4 L143.1 76.3 L133.2 73.2 L124.6 68.3 L120.3 64.0Z"/></g>
<path d="M0 218 L84 223 L73 240 L64 258 L61 274 L62.5 292 L56 327 L0 327Z" fill="#050505"/>
<path d="M250 212 L300 213 L348 218 L348 327 L301 327 L285 289 L284 267 L268 249 L253 230Z" fill="#050505"/>
</g>
<rect x="61" y="606" width="765" height="2.2" fill="#0f8f99"/>
<text x="70" y="641" font-size="19" font-weight="bold" fill="#8a8a8a" textLength="159" lengthAdjust="spacingAndGlyphs">Олеся Столярчук</text>
<text x="751" y="638" font-size="13" fill="#8a8a8a" textLength="65" lengthAdjust="spacingAndGlyphs">17.05.2024</text>
<path d="M157.4 408.4 V421.5 L160.8 418.6 L163.4 424.6 L165.4 423.7 L163 417.9 L167.6 417.9Z" fill="#fff" stroke="#333" stroke-width="0.8" stroke-linejoin="round"/>
</svg>
<div class="a" style="left:1220px;top:202px;width:218px;height:155px;border-radius:10px;background:#3c4043;overflow:hidden">
<svg style="left:0;top:0" width="218" height="155" viewBox="0 0 218 155"><defs><filter id="vb1"><feGaussianBlur stdDeviation="0.9"/></filter><filter id="vb2"><feGaussianBlur stdDeviation="2"/></filter></defs><g filter="url(#vb1)"><rect width="218" height="155" fill="#8c908e"/><rect x="30" y="8" width="3" height="8" fill="#6b5a4a"/><rect x="33" y="9" width="2" height="7" fill="#2a2c2b"/><rect x="35" y="7" width="2" height="9" fill="#8a908c"/><rect x="37" y="5" width="2" height="11" fill="#c8ccca"/><rect x="39" y="9" width="2" height="7" fill="#6b5a4a"/><rect x="41" y="9" width="4" height="7" fill="#c8ccca"/><rect x="45" y="5" width="2" height="11" fill="#6b5a4a"/><rect x="47" y="3" width="2" height="13" fill="#8a908c"/><rect x="49" y="8" width="2" height="8" fill="#7a7f7c"/><rect x="51" y="9" width="5" height="7" fill="#8a908c"/><rect x="56" y="6" width="5" height="10" fill="#3a3d3c"/><rect x="61" y="9" width="3" height="7" fill="#2a2c2b"/><rect x="66" y="7" width="3" height="9" fill="#6b5a4a"/><rect x="69" y="5" width="3" height="11" fill="#5a5e5c"/><rect x="72" y="7" width="5" height="9" fill="#2a2c2b"/><rect x="77" y="9" width="3" height="7" fill="#8a908c"/><rect x="80" y="4" width="5" height="12" fill="#c8ccca"/><rect x="85" y="9" width="3" height="7" fill="#2a2c2b"/><rect x="88" y="5" width="2" height="11" fill="#3a3d3c"/><rect x="90" y="8" width="5" height="8" fill="#b8bcba"/><rect x="95" y="6" width="5" height="10" fill="#4a5560"/><rect x="100" y="5" width="4" height="11" fill="#b8bcba"/><rect x="104" y="7" width="3" height="9" fill="#c8ccca"/><rect x="107" y="4" width="3" height="12" fill="#c8ccca"/><rect x="110" y="5" width="2" height="11" fill="#a0a5a2"/><rect x="112" y="6" width="5" height="10" fill="#4a5560"/><rect x="117" y="7" width="4" height="9" fill="#8a908c"/><rect x="121" y="9" width="2" height="7" fill="#2a2c2b"/><rect x="123" y="8" width="4" height="8" fill="#4a5560"/><rect x="131" y="6" width="3" height="10" fill="#6b5a4a"/><rect x="134" y="4" width="2" height="12" fill="#5a5e5c"/><rect x="136" y="5" width="5" height="11" fill="#4a5560"/><rect x="141" y="4" width="3" height="12" fill="#4a5560"/><rect x="144" y="6" width="5" height="10" fill="#8a908c"/><rect x="149" y="9" width="4" height="7" fill="#5a5e5c"/><rect x="153" y="6" width="3" height="10" fill="#7a7f7c"/><rect x="156" y="9" width="2" height="7" fill="#a0a5a2"/><rect x="158" y="4" width="5" height="12" fill="#b8bcba"/><rect x="163" y="4" width="3" height="12" fill="#6b5a4a"/><rect x="168" y="9" width="3" height="7" fill="#b8bcba"/><rect x="171" y="8" width="3" height="8" fill="#8a908c"/><rect x="174" y="6" width="2" height="10" fill="#3a3d3c"/><rect x="176" y="3" width="3" height="13" fill="#a0a5a2"/><rect x="179" y="4" width="3" height="12" fill="#c8ccca"/><rect x="182" y="6" width="4" height="10" fill="#b8bcba"/><rect x="186" y="8" width="2" height="8" fill="#b8bcba"/><rect x="188" y="5" width="4" height="11" fill="#a0a5a2"/><rect x="192" y="3" width="3" height="13" fill="#6b5a4a"/><rect x="195" y="7" width="5" height="9" fill="#6b5a4a"/><rect x="30" y="20" width="3" height="13" fill="#6b5a4a"/><rect x="33" y="24" width="3" height="9" fill="#5a5e5c"/><rect x="36" y="24" width="3" height="9" fill="#c8ccca"/><rect x="39" y="25" width="3" height="8" fill="#b8bcba"/><rect x="42" y="24" width="5" height="9" fill="#a0a5a2"/><rect x="47" y="25" width="3" height="8" fill="#6a6f6c"/><rect x="50" y="21" width="4" height="12" fill="#4a5560"/><rect x="54" y="21" width="5" height="12" fill="#4a5560"/><rect x="59" y="20" width="3" height="13" fill="#2a2c2b"/><rect x="66" y="20" width="5" height="13" fill="#7a7f7c"/><rect x="71" y="22" width="2" height="11" fill="#7a7f7c"/><rect x="73" y="22" width="5" height="11" fill="#6b5a4a"/><rect x="78" y="22" width="4" height="11" fill="#5a5e5c"/><rect x="82" y="20" width="4" height="13" fill="#6b5a4a"/><rect x="86" y="24" width="2" height="9" fill="#5a5e5c"/><rect x="88" y="22" width="3" height="11" fill="#6a6f6c"/><rect x="95" y="23" width="2" height="10" fill="#8a908c"/><rect x="97" y="25" width="2" height="8" fill="#3a3d3c"/><rect x="99" y="24" width="5" height="9" fill="#2a2c2b"/><rect x="104" y="23" width="2" height="10" fill="#8a908c"/><rect x="106" y="25" width="2" height="8" fill="#c8ccca"/><rect x="108" y="22" width="5" height="11" fill="#6a6f6c"/><rect x="113" y="23" width="3" height="10" fill="#8a908c"/><rect x="116" y="22" width="3" height="11" fill="#5a5e5c"/><rect x="119" y="19" width="2" height="14" fill="#b8bcba"/><rect x="121" y="22" width="4" height="11" fill="#b8bcba"/><rect x="125" y="25" width="3" height="8" fill="#6a6f6c"/><rect x="131" y="20" width="2" height="13" fill="#4a5560"/><rect x="133" y="22" width="3" height="11" fill="#6a6f6c"/><rect x="136" y="25" width="5" height="8" fill="#c8ccca"/><rect x="141" y="23" width="5" height="10" fill="#6a6f6c"/><rect x="146" y="25" width="5" height="8" fill="#2a2c2b"/><rect x="151" y="20" width="3" height="13" fill="#5a5e5c"/><rect x="154" y="21" width="3" height="12" fill="#4a5560"/><rect x="157" y="23" width="3" height="10" fill="#c8ccca"/><rect x="160" y="21" width="5" height="12" fill="#2a2c2b"/><rect x="168" y="20" width="3" height="13" fill="#c8ccca"/><rect x="171" y="19" width="5" height="14" fill="#c8ccca"/><rect x="176" y="19" width="3" height="14" fill="#6b5a4a"/><rect x="179" y="24" width="3" height="9" fill="#2a2c2b"/><rect x="182" y="23" width="4" height="10" fill="#3a3d3c"/><rect x="186" y="19" width="2" height="14" fill="#a0a5a2"/><rect x="188" y="23" width="4" height="10" fill="#c8ccca"/><rect x="192" y="23" width="5" height="10" fill="#b8bcba"/><rect x="197" y="23" width="3" height="10" fill="#5a5e5c"/><rect x="30" y="42" width="3" height="8" fill="#c8ccca"/><rect x="33" y="41" width="4" height="9" fill="#4a5560"/><rect x="37" y="39" width="3" height="11" fill="#8a908c"/><rect x="40" y="36" width="5" height="14" fill="#3a3d3c"/><rect x="45" y="37" width="4" height="13" fill="#4a5560"/><rect x="49" y="36" width="2" height="14" fill="#7a7f7c"/><rect x="51" y="39" width="2" height="11" fill="#c8ccca"/><rect x="53" y="41" width="4" height="9" fill="#6b5a4a"/><rect x="57" y="42" width="3" height="8" fill="#6b5a4a"/><rect x="60" y="39" width="4" height="11" fill="#5a5e5c"/><rect x="66" y="41" width="3" height="9" fill="#6a6f6c"/><rect x="69" y="41" width="2" height="9" fill="#8a908c"/><rect x="71" y="36" width="4" height="14" fill="#7a7f7c"/><rect x="75" y="38" width="3" height="12" fill="#8a908c"/><rect x="78" y="37" width="4" height="13" fill="#4a5560"/><rect x="82" y="38" width="3" height="12" fill="#2a2c2b"/><rect x="85" y="42" width="3" height="8" fill="#3a3d3c"/><rect x="88" y="38" width="2" height="12" fill="#6a6f6c"/><rect x="90" y="36" width="4" height="14" fill="#c8ccca"/><rect x="95" y="42" width="3" height="8" fill="#a0a5a2"/><rect x="98" y="40" width="3" height="10" fill="#2a2c2b"/><rect x="101" y="36" width="3" height="14" fill="#8a908c"/><rect x="104" y="40" width="3" height="10" fill="#2a2c2b"/><rect x="107" y="36" width="4" height="14" fill="#6a6f6c"/><rect x="111" y="37" width="2" height="13" fill="#4a5560"/><rect x="113" y="37" width="4" height="13" fill="#8a908c"/><rect x="117" y="39" width="5" height="11" fill="#2a2c2b"/><rect x="122" y="38" width="3" height="12" fill="#6a6f6c"/><rect x="125" y="38" width="5" height="12" fill="#3a3d3c"/><rect x="131" y="36" width="4" height="14" fill="#6a6f6c"/><rect x="135" y="42" width="5" height="8" fill="#6a6f6c"/><rect x="140" y="41" width="3" height="9" fill="#b8bcba"/><rect x="143" y="37" width="5" height="13" fill="#5a5e5c"/><rect x="148" y="42" width="5" height="8" fill="#4a5560"/><rect x="153" y="38" width="5" height="12" fill="#2a2c2b"/><rect x="158" y="36" width="4" height="14" fill="#5a5e5c"/><rect x="162" y="42" width="5" height="8" fill="#c8ccca"/><rect x="168" y="40" width="3" height="10" fill="#3a3d3c"/><rect x="171" y="38" width="2" height="12" fill="#b8bcba"/><rect x="173" y="42" width="5" height="8" fill="#5a5e5c"/><rect x="178" y="40" width="4" height="10" fill="#8a908c"/><rect x="182" y="38" width="5" height="12" fill="#2a2c2b"/><rect x="187" y="37" width="3" height="13" fill="#a0a5a2"/><rect x="190" y="38" width="4" height="12" fill="#2a2c2b"/><rect x="194" y="38" width="4" height="12" fill="#c8ccca"/><rect x="198" y="40" width="5" height="10" fill="#2a2c2b"/><rect x="30" y="53" width="3" height="14" fill="#b8bcba"/><rect x="33" y="56" width="3" height="11" fill="#5a5e5c"/><rect x="36" y="56" width="4" height="11" fill="#4a5560"/><rect x="40" y="54" width="2" height="13" fill="#c8ccca"/><rect x="42" y="59" width="4" height="8" fill="#c8ccca"/><rect x="46" y="53" width="3" height="14" fill="#5a5e5c"/><rect x="49" y="54" width="3" height="13" fill="#7a7f7c"/><rect x="52" y="58" width="3" height="9" fill="#a0a5a2"/><rect x="55" y="56" width="3" height="11" fill="#c8ccca"/><rect x="58" y="56" width="2" height="11" fill="#b8bcba"/><rect x="60" y="54" width="3" height="13" fill="#c8ccca"/><rect x="66" y="54" width="3" height="13" fill="#6b5a4a"/><rect x="69" y="56" width="5" height="11" fill="#4a5560"/><rect x="74" y="58" width="4" height="9" fill="#4a5560"/><rect x="78" y="59" width="3" height="8" fill="#4a5560"/><rect x="81" y="57" width="2" height="10" fill="#2a2c2b"/><rect x="83" y="56" width="4" height="11" fill="#3a3d3c"/><rect x="87" y="57" width="4" height="10" fill="#2a2c2b"/><rect x="95" y="57" width="5" height="10" fill="#2a2c2b"/><rect x="100" y="59" width="2" height="8" fill="#c8ccca"/><rect x="102" y="59" width="2" height="8" fill="#a0a5a2"/><rect x="104" y="59" width="3" height="8" fill="#6a6f6c"/><rect x="107" y="53" width="3" height="14" fill="#6a6f6c"/><rect x="110" y="53" width="4" height="14" fill="#7a7f7c"/><rect x="114" y="56" width="3" height="11" fill="#6a6f6c"/><rect x="117" y="55" width="5" height="12" fill="#8a908c"/><rect x="122" y="54" width="4" height="13" fill="#4a5560"/><rect x="126" y="57" width="2" height="10" fill="#3a3d3c"/><rect x="131" y="56" width="3" height="11" fill="#5a5e5c"/><rect x="134" y="59" width="3" height="8" fill="#7a7f7c"/><rect x="137" y="53" width="2" height="14" fill="#a0a5a2"/><rect x="139" y="55" width="2" height="12" fill="#c8ccca"/><rect x="141" y="57" width="2" height="10" fill="#5a5e5c"/><rect x="143" y="59" width="4" height="8" fill="#4a5560"/><rect x="147" y="56" width="5" height="11" fill="#a0a5a2"/><rect x="152" y="58" width="5" height="9" fill="#3a3d3c"/><rect x="157" y="54" width="5" height="13" fill="#c8ccca"/><rect x="162" y="58" width="2" height="9" fill="#a0a5a2"/><rect x="168" y="58" width="2" height="9" fill="#c8ccca"/><rect x="170" y="54" width="3" height="13" fill="#a0a5a2"/><rect x="173" y="53" width="5" height="14" fill="#c8ccca"/><rect x="178" y="56" width="3" height="11" fill="#2a2c2b"/><rect x="181" y="57" width="3" height="10" fill="#4a5560"/><rect x="184" y="57" width="2" height="10" fill="#3a3d3c"/><rect x="186" y="59" width="2" height="8" fill="#2a2c2b"/><rect x="188" y="58" width="5" height="9" fill="#2a2c2b"/><rect x="193" y="58" width="4" height="9" fill="#b8bcba"/><rect x="197" y="54" width="2" height="13" fill="#7a7f7c"/><rect x="30" y="71" width="4" height="13" fill="#b8bcba"/><rect x="34" y="70" width="5" height="14" fill="#6b5a4a"/><rect x="39" y="74" width="5" height="10" fill="#c8ccca"/><rect x="44" y="74" width="3" height="10" fill="#c8ccca"/><rect x="47" y="73" width="3" height="11" fill="#4a5560"/><rect x="50" y="70" width="2" height="14" fill="#6a6f6c"/><rect x="52" y="76" width="2" height="8" fill="#7a7f7c"/><rect x="54" y="73" width="3" height="11" fill="#6a6f6c"/><rect x="57" y="76" width="2" height="8" fill="#7a7f7c"/><rect x="59" y="70" width="4" height="14" fill="#2a2c2b"/><rect x="66" y="72" width="3" height="12" fill="#c8ccca"/><rect x="69" y="76" width="3" height="8" fill="#b8bcba"/><rect x="72" y="75" width="3" height="9" fill="#a0a5a2"/><rect x="75" y="76" width="4" height="8" fill="#a0a5a2"/><rect x="79" y="74" width="3" height="10" fill="#2a2c2b"/><rect x="82" y="75" width="3" height="9" fill="#3a3d3c"/><rect x="85" y="75" width="3" height="9" fill="#4a5560"/><rect x="88" y="76" width="3" height="8" fill="#4a5560"/><rect x="95" y="76" width="4" height="8" fill="#b8bcba"/><rect x="99" y="72" width="3" height="12" fill="#7a7f7c"/><rect x="102" y="75" width="3" height="9" fill="#2a2c2b"/><rect x="105" y="76" width="2" height="8" fill="#a0a5a2"/><rect x="107" y="75" width="2" height="9" fill="#6b5a4a"/><rect x="109" y="76" width="5" height="8" fill="#6b5a4a"/><rect x="114" y="74" width="2" height="10" fill="#a0a5a2"/><rect x="116" y="76" width="3" height="8" fill="#8a908c"/><rect x="119" y="70" width="5" height="14" fill="#6a6f6c"/><rect x="124" y="73" width="5" height="11" fill="#4a5560"/><rect x="131" y="75" width="4" height="9" fill="#a0a5a2"/><rect x="135" y="71" width="5" height="13" fill="#6a6f6c"/><rect x="140" y="70" width="2" height="14" fill="#2a2c2b"/><rect x="142" y="71" width="4" height="13" fill="#2a2c2b"/><rect x="146" y="72" width="3" height="12" fill="#2a2c2b"/><rect x="149" y="70" width="5" height="14" fill="#3a3d3c"/><rect x="154" y="70" width="5" height="14" fill="#7a7f7c"/><rect x="159" y="76" width="3" height="8" fill="#3a3d3c"/><rect x="162" y="75" width="2" height="9" fill="#7a7f7c"/><rect x="168" y="76" width="3" height="8" fill="#6b5a4a"/><rect x="171" y="72" width="4" height="12" fill="#3a3d3c"/><rect x="175" y="71" width="2" height="13" fill="#2a2c2b"/><rect x="177" y="73" width="3" height="11" fill="#a0a5a2"/><rect x="180" y="73" width="2" height="11" fill="#5a5e5c"/><rect x="182" y="72" width="5" height="12" fill="#5a5e5c"/><rect x="187" y="76" width="5" height="8" fill="#b8bcba"/><rect x="192" y="70" width="3" height="14" fill="#5a5e5c"/><rect x="195" y="75" width="3" height="9" fill="#c8ccca"/><rect x="198" y="71" width="3" height="13" fill="#7a7f7c"/><rect x="30" y="90" width="4" height="11" fill="#6b5a4a"/><rect x="34" y="90" width="2" height="11" fill="#7a7f7c"/><rect x="36" y="87" width="3" height="14" fill="#3a3d3c"/><rect x="39" y="88" width="5" height="13" fill="#7a7f7c"/><rect x="44" y="93" width="3" height="8" fill="#8a908c"/><rect x="47" y="91" width="3" height="10" fill="#a0a5a2"/><rect x="50" y="89" width="3" height="12" fill="#8a908c"/><rect x="53" y="93" width="3" height="8" fill="#b8bcba"/><rect x="56" y="90" width="2" height="11" fill="#a0a5a2"/><rect x="58" y="88" width="2" height="13" fill="#c8ccca"/><rect x="60" y="91" width="4" height="10" fill="#2a2c2b"/><rect x="66" y="90" width="3" height="11" fill="#b8bcba"/><rect x="69" y="87" width="4" height="14" fill="#5a5e5c"/><rect x="73" y="92" width="5" height="9" fill="#a0a5a2"/><rect x="78" y="90" width="2" height="11" fill="#3a3d3c"/><rect x="80" y="90" width="3" height="11" fill="#5a5e5c"/><rect x="83" y="90" width="5" height="11" fill="#a0a5a2"/><rect x="88" y="92" width="4" height="9" fill="#c8ccca"/><rect x="95" y="89" width="2" height="12" fill="#5a5e5c"/><rect x="97" y="88" width="3" height="13" fill="#2a2c2b"/><rect x="100" y="91" width="3" height="10" fill="#6a6f6c"/><rect x="103" y="87" width="5" height="14" fill="#7a7f7c"/><rect x="108" y="91" width="5" height="10" fill="#5a5e5c"/><rect x="113" y="92" width="3" height="9" fill="#b8bcba"/><rect x="116" y="90" width="4" height="11" fill="#3a3d3c"/><rect x="120" y="93" width="3" height="8" fill="#b8bcba"/><rect x="123" y="90" width="4" height="11" fill="#a0a5a2"/><rect x="131" y="90" width="3" height="11" fill="#4a5560"/><rect x="134" y="91" width="4" height="10" fill="#5a5e5c"/><rect x="138" y="93" width="3" height="8" fill="#4a5560"/><rect x="141" y="87" width="3" height="14" fill="#6b5a4a"/><rect x="144" y="92" width="2" height="9" fill="#3a3d3c"/><rect x="146" y="91" width="3" height="10" fill="#4a5560"/><rect x="149" y="90" width="2" height="11" fill="#6b5a4a"/><rect x="151" y="93" width="5" height="8" fill="#4a5560"/><rect x="156" y="87" width="4" height="14" fill="#a0a5a2"/><rect x="160" y="91" width="2" height="10" fill="#5a5e5c"/><rect x="162" y="87" width="2" height="14" fill="#7a7f7c"/><rect x="168" y="88" width="3" height="13" fill="#6a6f6c"/><rect x="171" y="91" width="3" height="10" fill="#6b5a4a"/><rect x="174" y="91" width="5" height="10" fill="#c8ccca"/><rect x="179" y="87" width="3" height="14" fill="#6b5a4a"/><rect x="182" y="87" width="2" height="14" fill="#7a7f7c"/><rect x="184" y="89" width="4" height="12" fill="#2a2c2b"/><rect x="188" y="88" width="3" height="13" fill="#5a5e5c"/><rect x="191" y="88" width="2" height="13" fill="#6b5a4a"/><rect x="193" y="89" width="4" height="12" fill="#6a6f6c"/><rect x="197" y="90" width="3" height="11" fill="#3a3d3c"/><rect x="30" y="109" width="5" height="9" fill="#6a6f6c"/><rect x="35" y="107" width="4" height="11" fill="#4a5560"/><rect x="39" y="108" width="3" height="10" fill="#a0a5a2"/><rect x="42" y="107" width="3" height="11" fill="#7a7f7c"/><rect x="45" y="108" width="3" height="10" fill="#b8bcba"/><rect x="48" y="105" width="5" height="13" fill="#6b5a4a"/><rect x="53" y="109" width="2" height="9" fill="#7a7f7c"/><rect x="55" y="110" width="3" height="8" fill="#c8ccca"/><rect x="58" y="104" width="5" height="14" fill="#b8bcba"/><rect x="66" y="109" width="5" height="9" fill="#b8bcba"/><rect x="71" y="104" width="3" height="14" fill="#b8bcba"/><rect x="74" y="109" width="4" height="9" fill="#2a2c2b"/><rect x="78" y="109" width="3" height="9" fill="#5a5e5c"/><rect x="81" y="108" width="3" height="10" fill="#2a2c2b"/><rect x="84" y="108" width="2" height="10" fill="#c8ccca"/><rect x="86" y="108" width="3" height="10" fill="#8a908c"/><rect x="89" y="110" width="3" height="8" fill="#6b5a4a"/><rect x="95" y="107" width="4" height="11" fill="#2a2c2b"/><rect x="99" y="107" width="3" height="11" fill="#a0a5a2"/><rect x="102" y="104" width="3" height="14" fill="#3a3d3c"/><rect x="105" y="108" width="4" height="10" fill="#8a908c"/><rect x="109" y="109" width="3" height="9" fill="#7a7f7c"/><rect x="112" y="106" width="5" height="12" fill="#7a7f7c"/><rect x="117" y="110" width="3" height="8" fill="#a0a5a2"/><rect x="120" y="107" width="3" height="11" fill="#6b5a4a"/><rect x="123" y="107" width="4" height="11" fill="#a0a5a2"/><rect x="131" y="109" width="2" height="9" fill="#3a3d3c"/><rect x="133" y="105" width="4" height="13" fill="#b8bcba"/><rect x="137" y="107" width="5" height="11" fill="#3a3d3c"/><rect x="142" y="107" width="2" height="11" fill="#2a2c2b"/><rect x="144" y="107" width="4" height="11" fill="#c8ccca"/><rect x="148" y="109" width="2" height="9" fill="#6a6f6c"/><rect x="150" y="106" width="3" height="12" fill="#7a7f7c"/><rect x="153" y="104" width="2" height="14" fill="#7a7f7c"/><rect x="155" y="110" width="4" height="8" fill="#2a2c2b"/><rect x="159" y="110" width="2" height="8" fill="#6a6f6c"/><rect x="161" y="106" width="3" height="12" fill="#3a3d3c"/><rect x="168" y="109" width="3" height="9" fill="#7a7f7c"/><rect x="171" y="106" width="3" height="12" fill="#7a7f7c"/><rect x="174" y="105" width="4" height="13" fill="#5a5e5c"/><rect x="178" y="110" width="2" height="8" fill="#a0a5a2"/><rect x="180" y="106" width="5" height="12" fill="#c8ccca"/><rect x="185" y="108" width="4" height="10" fill="#c8ccca"/><rect x="189" y="110" width="5" height="8" fill="#3a3d3c"/><rect x="194" y="108" width="5" height="10" fill="#b8bcba"/><rect x="30" y="125" width="3" height="10" fill="#7a7f7c"/><rect x="33" y="124" width="3" height="11" fill="#2a2c2b"/><rect x="36" y="123" width="3" height="12" fill="#c8ccca"/><rect x="39" y="124" width="2" height="11" fill="#7a7f7c"/><rect x="41" y="127" width="3" height="8" fill="#3a3d3c"/><rect x="44" y="124" width="3" height="11" fill="#7a7f7c"/><rect x="47" y="127" width="4" height="8" fill="#a0a5a2"/><rect x="51" y="122" width="3" height="13" fill="#6b5a4a"/><rect x="54" y="126" width="3" height="9" fill="#b8bcba"/><rect x="57" y="122" width="2" height="13" fill="#4a5560"/><rect x="59" y="125" width="4" height="10" fill="#7a7f7c"/><rect x="66" y="126" width="4" height="9" fill="#3a3d3c"/><rect x="70" y="122" width="3" height="13" fill="#2a2c2b"/><rect x="73" y="126" width="2" height="9" fill="#b8bcba"/><rect x="75" y="125" width="3" height="10" fill="#c8ccca"/><rect x="78" y="124" width="3" height="11" fill="#c8ccca"/><rect x="81" y="121" width="3" height="14" fill="#a0a5a2"/><rect x="84" y="123" width="2" height="12" fill="#b8bcba"/><rect x="86" y="126" width="5" height="9" fill="#c8ccca"/><rect x="95" y="124" width="4" height="11" fill="#7a7f7c"/><rect x="99" y="123" width="2" height="12" fill="#6a6f6c"/><rect x="101" y="127" width="4" height="8" fill="#c8ccca"/><rect x="105" y="123" width="2" height="12" fill="#6a6f6c"/><rect x="107" y="127" width="4" height="8" fill="#3a3d3c"/><rect x="111" y="124" width="3" height="11" fill="#b8bcba"/><rect x="114" y="122" width="3" height="13" fill="#5a5e5c"/><rect x="117" y="126" width="2" height="9" fill="#4a5560"/><rect x="119" y="126" width="3" height="9" fill="#7a7f7c"/><rect x="122" y="122" width="5" height="13" fill="#b8bcba"/><rect x="131" y="125" width="2" height="10" fill="#7a7f7c"/><rect x="133" y="121" width="4" height="14" fill="#4a5560"/><rect x="137" y="124" width="3" height="11" fill="#6a6f6c"/><rect x="140" y="127" width="2" height="8" fill="#5a5e5c"/><rect x="142" y="127" width="3" height="8" fill="#4a5560"/><rect x="145" y="127" width="4" height="8" fill="#2a2c2b"/><rect x="149" y="124" width="3" height="11" fill="#4a5560"/><rect x="152" y="121" width="3" height="14" fill="#6b5a4a"/><rect x="155" y="127" width="2" height="8" fill="#b8bcba"/><rect x="157" y="125" width="3" height="10" fill="#2a2c2b"/><rect x="160" y="126" width="4" height="9" fill="#4a5560"/><rect x="168" y="122" width="3" height="13" fill="#b8bcba"/><rect x="171" y="122" width="2" height="13" fill="#6b5a4a"/><rect x="173" y="121" width="3" height="14" fill="#7a7f7c"/><rect x="176" y="127" width="4" height="8" fill="#6b5a4a"/><rect x="180" y="124" width="2" height="11" fill="#5a5e5c"/><rect x="182" y="125" width="2" height="10" fill="#c8ccca"/><rect x="184" y="123" width="2" height="12" fill="#4a5560"/><rect x="186" y="125" width="3" height="10" fill="#4a5560"/><rect x="189" y="127" width="5" height="8" fill="#a0a5a2"/><rect x="194" y="125" width="3" height="10" fill="#a0a5a2"/><rect x="197" y="122" width="2" height="13" fill="#8a908c"/><rect x="30" y="145" width="2" height="10" fill="#c8ccca"/><rect x="32" y="138" width="2" height="17" fill="#b8bcba"/><rect x="34" y="141" width="4" height="14" fill="#6b5a4a"/><rect x="38" y="143" width="4" height="12" fill="#b8bcba"/><rect x="42" y="145" width="3" height="10" fill="#a0a5a2"/><rect x="45" y="142" width="3" height="13" fill="#4a5560"/><rect x="48" y="138" width="3" height="17" fill="#4a5560"/><rect x="51" y="144" width="5" height="11" fill="#2a2c2b"/><rect x="56" y="139" width="3" height="16" fill="#6a6f6c"/><rect x="59" y="139" width="3" height="16" fill="#5a5e5c"/><rect x="66" y="138" width="2" height="17" fill="#2a2c2b"/><rect x="68" y="140" width="5" height="15" fill="#6a6f6c"/><rect x="73" y="144" width="4" height="11" fill="#5a5e5c"/><rect x="77" y="144" width="3" height="11" fill="#c8ccca"/><rect x="80" y="139" width="2" height="16" fill="#b8bcba"/><rect x="82" y="143" width="4" height="12" fill="#c8ccca"/><rect x="86" y="139" width="3" height="16" fill="#b8bcba"/><rect x="89" y="142" width="5" height="13" fill="#2a2c2b"/><rect x="95" y="141" width="2" height="14" fill="#a0a5a2"/><rect x="97" y="141" width="3" height="14" fill="#4a5560"/><rect x="100" y="141" width="3" height="14" fill="#c8ccca"/><rect x="103" y="142" width="4" height="13" fill="#6a6f6c"/><rect x="107" y="142" width="3" height="13" fill="#6a6f6c"/><rect x="110" y="142" width="3" height="13" fill="#4a5560"/><rect x="113" y="139" width="2" height="16" fill="#a0a5a2"/><rect x="115" y="142" width="3" height="13" fill="#7a7f7c"/><rect x="118" y="138" width="2" height="17" fill="#3a3d3c"/><rect x="120" y="145" width="2" height="10" fill="#b8bcba"/><rect x="122" y="138" width="3" height="17" fill="#4a5560"/><rect x="125" y="141" width="2" height="14" fill="#c8ccca"/><rect x="131" y="145" width="2" height="10" fill="#c8ccca"/><rect x="133" y="142" width="5" height="13" fill="#5a5e5c"/><rect x="138" y="143" width="3" height="12" fill="#b8bcba"/><rect x="141" y="141" width="5" height="14" fill="#7a7f7c"/><rect x="146" y="144" width="2" height="11" fill="#7a7f7c"/><rect x="148" y="140" width="5" height="15" fill="#c8ccca"/><rect x="153" y="140" width="2" height="15" fill="#4a5560"/><rect x="155" y="145" width="3" height="10" fill="#c8ccca"/><rect x="158" y="145" width="3" height="10" fill="#8a908c"/><rect x="161" y="145" width="3" height="10" fill="#4a5560"/><rect x="168" y="140" width="4" height="15" fill="#6a6f6c"/><rect x="172" y="141" width="5" height="14" fill="#5a5e5c"/><rect x="177" y="145" width="3" height="10" fill="#b8bcba"/><rect x="180" y="138" width="5" height="17" fill="#5a5e5c"/><rect x="185" y="144" width="4" height="11" fill="#6b5a4a"/><rect x="189" y="143" width="5" height="12" fill="#7a7f7c"/><rect x="194" y="144" width="5" height="11" fill="#7a7f7c"/><rect x="27" y="0" width="176" height="3" fill="#c4c8c6"/><rect x="27" y="16" width="176" height="3" fill="#c4c8c6"/><rect x="27" y="33" width="176" height="3" fill="#c4c8c6"/><rect x="27" y="50" width="176" height="3" fill="#c4c8c6"/><rect x="27" y="67" width="176" height="3" fill="#c4c8c6"/><rect x="27" y="84" width="176" height="3" fill="#c4c8c6"/><rect x="27" y="101" width="176" height="3" fill="#c4c8c6"/><rect x="27" y="118" width="176" height="3" fill="#c4c8c6"/><rect x="27" y="135" width="176" height="3" fill="#c4c8c6"/><rect x="27" y="0" width="3" height="155" fill="#c0c4c2"/><rect x="63" y="0" width="3" height="155" fill="#c0c4c2"/><rect x="92" y="0" width="3" height="155" fill="#c0c4c2"/><rect x="128" y="0" width="3" height="155" fill="#c0c4c2"/><rect x="165" y="0" width="3" height="155" fill="#c0c4c2"/><rect x="200" y="0" width="3" height="155" fill="#c0c4c2"/><rect x="0" y="0" width="14" height="155" fill="#2a2d2a"/><rect x="14" y="0" width="9" height="155" fill="#dfe4e1"/><rect x="23" y="0" width="4" height="155" fill="#6a6d6a"/><rect x="200" y="0" width="8" height="155" fill="#c3c8c6"/><rect x="208" y="0" width="10" height="155" fill="#e6eae8"/><rect x="38" y="0" width="3" height="155" fill="#e2e5e3"/><rect x="58" y="0" width="3" height="155" fill="#e2e5e3"/><rect x="38" y="8" width="23" height="2" fill="#e2e5e3"/><rect x="38" y="22" width="23" height="2" fill="#e2e5e3"/><rect x="38" y="36" width="23" height="2" fill="#e2e5e3"/><rect x="38" y="50" width="23" height="2" fill="#e2e5e3"/><rect x="38" y="64" width="23" height="2" fill="#e2e5e3"/><rect x="38" y="78" width="23" height="2" fill="#e2e5e3"/><rect x="38" y="92" width="23" height="2" fill="#e2e5e3"/><rect x="38" y="106" width="23" height="2" fill="#e2e5e3"/><rect x="38" y="120" width="23" height="2" fill="#e2e5e3"/><rect x="38" y="134" width="23" height="2" fill="#e2e5e3"/><rect x="38" y="148" width="23" height="2" fill="#e2e5e3"/><rect x="163" y="90" width="28" height="25" fill="#252525"/></g><g filter="url(#vb2)"><path d="M88 155 Q94 118 100 98 Q100 62 106 48 Q118 36 136 37 Q158 38 164 56 Q168 85 170 108 Q180 128 184 155Z" fill="#876552"/><ellipse cx="136" cy="78" rx="19" ry="24" fill="#cfa591"/><path d="M108 60 Q114 42 136 41 Q158 42 162 60 Q148 50 134 52 Q120 54 108 60Z" fill="#8f705c"/><path d="M38 155 Q52 120 96 110 Q116 118 137 120 Q160 116 178 111 Q200 124 206 155Z" fill="#858070"/><path d="M120 108 Q128 120 137 122 Q148 120 154 108 L156 124 L118 124Z" fill="#c89c88" opacity="0.7"/></g></svg>
<div class="a" style="left:0;top:0;width:218px;height:155px;border:5px solid #669df6;border-radius:10px"></div>
<div class="a" style="left:170px;top:14px;width:33px;height:33px;border-radius:50%;background:#1f73e0"></div>
<svg style="left:170px;top:14px" width="33" height="33"><g fill="#fff"><rect x="6" y="12" width="5" height="12" rx="1.5"/><rect x="14" y="10" width="5" height="16" rx="1.5"/><rect x="21" y="12" width="5" height="12" rx="1.5"/></g></svg>
</div>
<svg style="left:1240px;top:320px" width="200" height="24"><text x="0" y="16" font-size="16.8" fill="#fff" stroke="#fff" stroke-width="0.55" textLength="177" lengthAdjust="spacingAndGlyphs">Олеся Анатоліївна ...</text></svg>
<div class="a" style="left:1453px;top:202px;width:216px;height:155px;border-radius:10px;background:#3c4043;overflow:hidden">
<svg style="left:75.5px;top:44.5px" width="65" height="65" viewBox="0 0 65 65"><defs><clipPath id="c1"><circle cx="32.5" cy="32.5" r="32.5"/></clipPath></defs><g clip-path="url(#c1)"><rect width="65" height="65" fill="#1c2036"/><rect x="0" y="0" width="13" height="65" fill="#4a5250"/><rect x="12" y="0" width="4" height="65" fill="#2a2e30"/><rect x="21" y="2" width="2" height="8" fill="#5a5ad0"/><path d="M12 30 Q10 8 32 5 Q55 6 58 30 Q56 40 50 42 L18 42 Q12 38 12 30Z" fill="#c4a684"/><path d="M40 6 Q56 10 58 30 L52 34 Q50 16 40 12Z" fill="#6a5848"/><ellipse cx="31" cy="33" rx="15" ry="18" fill="#dcab94"/><path d="M18 22 Q26 14 40 18 L44 24 Q30 18 18 26Z" fill="#c4a684"/><path d="M8 65 Q12 44 30 46 Q50 42 60 60 L60 65Z" fill="#c9c19a"/><path d="M40 46 Q52 48 58 62 L48 65 Q46 52 40 46Z" fill="#a8a080"/></g></svg>
<div class="a" style="left:168.5px;top:15px;width:33px;height:33px;border-radius:50%;background:#323538"></div><svg style="left:175px;top:21px" width="20" height="20" viewBox="0 0 24 24"><path d="M19 11h-1.7c0 .74-.16 1.43-.43 2.05l1.23 1.23c.56-.98.9-2.090.9-3.28zm-4.02.17c0-.06.02-.11.02-.17V5c0-1.66-1.34-3-3-3S9 3.34 9 5v.18l5.98 5.99zM4.27 3L3 4.27l6.01 6.01V11c0 1.66 1.33 3 2.99 3 .22 0 .44-.03.65-.08l1.66 1.66c-.71.33-1.5.52-2.31.52-2.76 0-5.3-2.1-5.3-5.1H5c0 3.41 2.72 6.230 6 6.72V21h2v-3.28c.91-.13 1.77-.45 2.54-.9L19.73 21 21 19.73 4.27 3z" fill="#fff"/></svg>
</div>
<svg style="left:1473px;top:320px" width="200" height="24"><text x="0" y="16" font-size="16.8" fill="#fff" stroke="#fff" stroke-width="0.55" textLength="77.5" lengthAdjust="spacingAndGlyphs">Maryna P</text></svg>
<div class="a" style="left:1684px;top:202px;width:216px;height:155px;border-radius:10px;background:#3c4043;overflow:hidden">
<svg style="left:42px;top:0" width="131" height="155" viewBox="0 0 131 155"><defs><radialGradient id="ceil" cx="0.45" cy="0" r="0.8"><stop offset="0" stop-color="#f8f0e8"/><stop offset="0.6" stop-color="#e0cdbd"/><stop offset="1" stop-color="#b89a82"/></radialGradient><filter id="vb3"><feGaussianBlur stdDeviation="1.5"/></filter></defs><g filter="url(#vb3)"><rect width="131" height="155" fill="#a07048"/><rect width="131" height="40" fill="url(#ceil)"/><rect x="0" y="38" width="46" height="117" fill="#c98e58"/><rect x="20" y="40" width="2" height="115" fill="#a87040"/><rect x="47" y="40" width="84" height="115" fill="#4d3a2c"/><rect x="50" y="48" width="2" height="20" fill="#d04030"/><rect x="52" y="48" width="2" height="20" fill="#c8b8a0"/><rect x="54" y="48" width="3" height="20" fill="#e8d8c8"/><rect x="57" y="44" width="2" height="20" fill="#d04030"/><rect x="59" y="48" width="3" height="20" fill="#c8b8a0"/><rect x="62" y="49" width="2" height="20" fill="#8a5a3a"/><rect x="64" y="50" width="3" height="20" fill="#d04030"/><rect x="67" y="47" width="4" height="20" fill="#3a2a20"/><rect x="71" y="45" width="4" height="20" fill="#6a5040"/><rect x="75" y="45" width="2" height="20" fill="#e8d8c8"/><rect x="77" y="49" width="4" height="20" fill="#3a2a20"/><rect x="81" y="50" width="2" height="20" fill="#e8d8c8"/><rect x="83" y="50" width="2" height="20" fill="#8a5a3a"/><rect x="85" y="46" width="4" height="20" fill="#f0e0d0"/><rect x="89" y="50" width="2" height="20" fill="#6a5040"/><rect x="91" y="48" width="3" height="20" fill="#3a2a20"/><rect x="94" y="49" width="4" height="20" fill="#3a2a20"/><rect x="98" y="49" width="3" height="20" fill="#3a2a20"/><rect x="101" y="45" width="4" height="20" fill="#3a2a20"/><rect x="105" y="44" width="3" height="20" fill="#f0e0d0"/><rect x="50" y="68" width="2" height="23" fill="#3a2a20"/><rect x="52" y="70" width="3" height="23" fill="#e8d8c8"/><rect x="55" y="69" width="4" height="23" fill="#6a5040"/><rect x="59" y="73" width="3" height="23" fill="#d04030"/><rect x="62" y="69" width="3" height="23" fill="#d04030"/><rect x="65" y="70" width="4" height="23" fill="#d04030"/><rect x="69" y="69" width="4" height="23" fill="#8a5a3a"/><rect x="73" y="73" width="4" height="23" fill="#f0e0d0"/><rect x="77" y="72" width="3" height="23" fill="#d04030"/><rect x="80" y="72" width="4" height="23" fill="#8a5a3a"/><rect x="84" y="71" width="3" height="23" fill="#d04030"/><rect x="87" y="72" width="4" height="23" fill="#f0e0d0"/><rect x="91" y="72" width="4" height="23" fill="#8a5a3a"/><rect x="95" y="69" width="4" height="23" fill="#c8b8a0"/><rect x="99" y="70" width="2" height="23" fill="#f0e0d0"/><rect x="101" y="67" width="4" height="23" fill="#3a2a20"/><rect x="105" y="67" width="3" height="23" fill="#6a5040"/><rect x="50" y="93" width="3" height="22" fill="#8a5a3a"/><rect x="53" y="99" width="3" height="22" fill="#3a2a20"/><rect x="56" y="93" width="3" height="22" fill="#6a5040"/><rect x="59" y="97" width="2" height="22" fill="#d04030"/><rect x="61" y="98" width="2" height="22" fill="#3a2a20"/><rect x="63" y="97" width="4" height="22" fill="#c8b8a0"/><rect x="67" y="94" width="3" height="22" fill="#d04030"/><rect x="70" y="93" width="2" height="22" fill="#c8b8a0"/><rect x="72" y="97" width="2" height="22" fill="#f0e0d0"/><rect x="74" y="94" width="4" height="22" fill="#f0e0d0"/><rect x="78" y="97" width="3" height="22" fill="#c8b8a0"/><rect x="81" y="98" width="3" height="22" fill="#8a5a3a"/><rect x="84" y="95" width="2" height="22" fill="#6a5040"/><rect x="86" y="94" width="3" height="22" fill="#c8b8a0"/><rect x="89" y="96" width="3" height="22" fill="#3a2a20"/><rect x="92" y="98" width="4" height="22" fill="#3a2a20"/><rect x="96" y="97" width="4" height="22" fill="#e8d8c8"/><rect x="100" y="99" width="2" height="22" fill="#d04030"/><rect x="102" y="96" width="4" height="22" fill="#c8b8a0"/><rect x="106" y="98" width="4" height="22" fill="#e8d8c8"/><rect x="50" y="121" width="2" height="22" fill="#c8b8a0"/><rect x="52" y="120" width="3" height="22" fill="#d04030"/><rect x="55" y="118" width="4" height="22" fill="#c8b8a0"/><rect x="59" y="120" width="3" height="22" fill="#d04030"/><rect x="62" y="122" width="2" height="22" fill="#3a2a20"/><rect x="64" y="119" width="4" height="22" fill="#e8d8c8"/><rect x="68" y="123" width="2" height="22" fill="#e8d8c8"/><rect x="70" y="120" width="3" height="22" fill="#3a2a20"/><rect x="73" y="122" width="4" height="22" fill="#c8b8a0"/><rect x="77" y="123" width="4" height="22" fill="#c8b8a0"/><rect x="81" y="122" width="3" height="22" fill="#f0e0d0"/><rect x="84" y="118" width="2" height="22" fill="#e8d8c8"/><rect x="86" y="123" width="3" height="22" fill="#c8b8a0"/><rect x="89" y="122" width="3" height="22" fill="#c8b8a0"/><rect x="92" y="119" width="4" height="22" fill="#c8b8a0"/><rect x="96" y="120" width="3" height="22" fill="#8a5a3a"/><rect x="99" y="122" width="3" height="22" fill="#6a5040"/><rect x="102" y="124" width="3" height="22" fill="#c8b8a0"/><rect x="105" y="124" width="3" height="22" fill="#f0e0d0"/><rect x="47" y="40" width="84" height="4" fill="#d7a56b"/><rect x="47" y="64" width="84" height="3" fill="#d09a60"/><rect x="47" y="90" width="84" height="3" fill="#d09a60"/><rect x="47" y="115" width="84" height="3" fill="#d09a60"/><rect x="47" y="40" width="3" height="115" fill="#d09a60"/><rect x="75" y="40" width="3" height="115" fill="#d09a60"/><rect x="108" y="48" width="23" height="107" fill="#cdbba5"/><path d="M0 155 Q8 112 40 98 L60 95 Q72 108 84 96 L98 98 Q125 110 128 155Z" fill="#24407e"/><ellipse cx="67" cy="86" rx="15" ry="19" fill="#c49a86"/><path d="M46 80 Q40 56 58 50 Q80 46 88 62 Q92 76 86 86 Q84 66 70 64 Q54 64 52 84Z" fill="#2a1d1c"/></g></svg>
<div class="a" style="left:168.5px;top:15px;width:33px;height:33px;border-radius:50%;background:rgba(32,33,36,0.45)"></div><svg style="left:175px;top:21px" width="20" height="20" viewBox="0 0 24 24"><path d="M19 11h-1.7c0 .74-.16 1.43-.43 2.05l1.23 1.23c.56-.98.9-2.090.9-3.28zm-4.02.17c0-.06.02-.11.02-.17V5c0-1.66-1.34-3-3-3S9 3.34 9 5v.18l5.98 5.99zM4.27 3L3 4.27l6.01 6.01V11c0 1.66 1.33 3 2.99 3 .22 0 .44-.03.65-.08l1.66 1.66c-.71.33-1.5.52-2.31.52-2.76 0-5.3-2.1-5.3-5.1H5c0 3.41 2.72 6.230 6 6.72V21h2v-3.28c.91-.13 1.77-.45 2.54-.9L19.73 21 21 19.73 4.27 3z" fill="#fff"/></svg>
</div>
<svg style="left:1704px;top:320px" width="200" height="24"><text x="0" y="16" font-size="16.8" fill="#fff" stroke="#fff" stroke-width="0.55" textLength="173" lengthAdjust="spacingAndGlyphs">Liudmyla Fylypovych</text></svg>
<div class="a" style="left:1220px;top:372px;width:218px;height:155px;border-radius:10px;background:#3c4043;overflow:hidden">
<svg style="left:76.5px;top:44.5px" width="65" height="65" viewBox="0 0 65 65"><defs><clipPath id="c3"><circle cx="32.5" cy="32.5" r="32.5"/></clipPath></defs><g clip-path="url(#c3)"><rect width="65" height="65" fill="#1e1c1c"/><rect x="0" y="3" width="16" height="42" fill="#d8c8c0"/><rect x="16" y="12" width="7" height="22" fill="#e0508a"/><rect x="0" y="34" width="22" height="22" fill="#9a6a3a"/><rect x="23" y="14" width="8" height="10" fill="#3a8070"/><rect x="48" y="22" width="14" height="30" fill="#2a3a3a"/><path d="M28 20 Q34 7 46 9 Q58 14 56 34 L54 46 Q62 50 62 56 L48 56 L46 36Z" fill="#d6c6a4"/><ellipse cx="36" cy="30" rx="12.5" ry="15.5" fill="#e2b2a0"/><path d="M30 36 Q33 38 37 36" stroke="#d04040" stroke-width="1.6" fill="none"/><path d="M17 28 Q22 24 27 30 L30 50 L24 52 Q18 44 17 28Z" fill="#e8c090"/><path d="M4 48 Q10 44 20 46 L22 60 L6 62Z" fill="#505858"/><path d="M12 65 Q16 48 30 47 Q46 46 56 54 L56 65Z" fill="#151515"/></g></svg>
<div class="a" style="left:170.5px;top:15px;width:33px;height:33px;border-radius:50%;background:#323538"></div><svg style="left:177px;top:21px" width="20" height="20" viewBox="0 0 24 24"><path d="M19 11h-1.7c0 .74-.16 1.43-.43 2.05l1.23 1.23c.56-.98.9-2.090.9-3.28zm-4.02.17c0-.06.02-.11.02-.17V5c0-1.66-1.34-3-3-3S9 3.34 9 5v.18l5.98 5.99zM4.27 3L3 4.27l6.01 6.01V11c0 1.66 1.33 3 2.99 3 .22 0 .44-.03.65-.08l1.66 1.66c-.71.33-1.5.52-2.31.52-2.76 0-5.3-2.1-5.3-5.1H5c0 3.41 2.72 6.230 6 6.72V21h2v-3.28c.91-.13 1.77-.45 2.54-.9L19.73 21 21 19.73 4.27 3z" fill="#fff"/></svg>
</div>
<svg style="left:1240px;top:490px" width="200" height="24"><text x="0" y="16" font-size="16.8" fill="#fff" stroke="#fff" stroke-width="0.55" textLength="168" lengthAdjust="spacingAndGlyphs">Софія Олександрі...</text></svg>
<div class="a" style="left:1453px;top:372px;width:216px;height:155px;border-radius:10px;background:#3c4043;overflow:hidden">
<svg style="left:0;top:0" width="216" height="155" viewBox="0 0 216 155"><defs><radialGradient id="wall" cx="0.55" cy="0.55" r="0.75"><stop offset="0" stop-color="#d3cdc4"/><stop offset="0.6" stop-color="#c8c4ba"/><stop offset="1" stop-color="#8e968c"/></radialGradient><filter id="vb5"><feGaussianBlur stdDeviation="1.6"/></filter></defs><g filter="url(#vb5)"><rect width="216" height="155" fill="url(#wall)"/><rect x="127" y="18" width="47" height="48" fill="#5a88b0"/><rect x="129" y="20" width="12" height="44" fill="#7aa050"/><rect x="146" y="38" width="22" height="24" fill="#d8a040"/><rect x="150" y="20" width="20" height="18" fill="#a8c8e0"/><rect x="136" y="50" width="14" height="14" fill="#e07040"/><path d="M66 155 Q62 110 72 90 Q88 74 104 76 Q126 80 130 108 Q134 135 125 155Z" fill="#3c2824"/><ellipse cx="96" cy="122" rx="20" ry="24" fill="#b07c6c"/><path d="M74 112 Q76 86 98 85 Q122 86 126 112 Q112 96 98 96 Q84 96 74 112Z" fill="#3c2824"/><rect x="80" y="118" width="34" height="5" rx="2" fill="#4a4ab0" opacity="0.5"/><path d="M50 155 Q66 140 96 143 Q128 140 150 155Z" fill="#3f8fa8"/></g></svg>
<div class="a" style="left:168.5px;top:15px;width:33px;height:33px;border-radius:50%;background:rgba(90,92,90,0.75)"></div><svg style="left:175px;top:21px" width="20" height="20" viewBox="0 0 24 24"><path d="M19 11h-1.7c0 .74-.16 1.43-.43 2.05l1.23 1.23c.56-.98.9-2.090.9-3.28zm-4.02.17c0-.06.02-.11.02-.17V5c0-1.66-1.34-3-3-3S9 3.34 9 5v.18l5.98 5.99zM4.27 3L3 4.27l6.01 6.01V11c0 1.66 1.33 3 2.99 3 .22 0 .44-.03.65-.08l1.66 1.66c-.71.33-1.5.52-2.31.52-2.76 0-5.3-2.1-5.3-5.1H5c0 3.41 2.72 6.230 6 6.72V21h2v-3.28c.91-.13 1.77-.45 2.54-.9L19.73 21 21 19.73 4.27 3z" fill="#fff"/></svg>
</div>
<svg style="left:1473px;top:490px" width="200" height="24"><text x="0" y="16" font-size="16.8" fill="#fff" stroke="#fff" stroke-width="0.55" textLength="174" lengthAdjust="spacingAndGlyphs">Марина Вадимівна...</text></svg>
<div class="a" style="left:1684px;top:372px;width:216px;height:155px;border-radius:10px;background:#3c4043;overflow:hidden">
<div class="a" style="left:75.5px;top:44.5px;width:65px;height:65px;border-radius:50%;background:#e8467c;color:#fff;font-size:37px;line-height:65px;text-align:center">О</div>
<div class="a" style="left:168.5px;top:15px;width:33px;height:33px;border-radius:50%;background:#323538"></div><svg style="left:175px;top:21px" width="20" height="20" viewBox="0 0 24 24"><path d="M19 11h-1.7c0 .74-.16 1.43-.43 2.05l1.23 1.23c.56-.98.9-2.090.9-3.28zm-4.02.17c0-.06.02-.11.02-.17V5c0-1.66-1.34-3-3-3S9 3.34 9 5v.18l5.98 5.99zM4.27 3L3 4.27l6.01 6.01V11c0 1.66 1.33 3 2.99 3 .22 0 .44-.03.65-.08l1.66 1.66c-.71.33-1.5.52-2.31.52-2.76 0-5.3-2.1-5.3-5.1H5c0 3.41 2.72 6.230 6 6.72V21h2v-3.28c.91-.13 1.77-.45 2.54-.9L19.73 21 21 19.73 4.27 3z" fill="#fff"/></svg>
</div>
<svg style="left:1704px;top:490px" width="200" height="24"><text x="0" y="16" font-size="16.8" fill="#fff" stroke="#fff" stroke-width="0.55" textLength="173.6" lengthAdjust="spacingAndGlyphs">Олександр Віталій...</text></svg>
<div class="a" style="left:1220px;top:542px;width:218px;height:155px;border-radius:10px;background:#3c4043;overflow:hidden">
<svg style="left:76.5px;top:44.5px" width="65" height="65" viewBox="0 0 65 65"><defs><clipPath id="c6"><circle cx="32.5" cy="32.5" r="32.5"/></clipPath></defs><g clip-path="url(#c6)"><rect width="65" height="65" fill="#ebebed"/><path d="M21 18 Q22 7 34 7 Q46 8 46 18 Q40 13 34 13 Q27 13 21 18Z" fill="#7a5a40"/><ellipse cx="34" cy="28" rx="12" ry="14.5" fill="#d8a890"/><rect x="28" y="38" width="13" height="10" fill="#d0a088"/><ellipse cx="21.5" cy="27" rx="2" ry="3.5" fill="#d8a890"/><ellipse cx="46.5" cy="27" rx="2" ry="3.5" fill="#d8a890"/><path d="M2 65 Q6 50 22 45 Q34 54 46 45 Q62 50 64 65Z" fill="#141414"/></g></svg>
<div class="a" style="left:170.5px;top:15px;width:33px;height:33px;border-radius:50%;background:#323538"></div><svg style="left:177px;top:21px" width="20" height="20" viewBox="0 0 24 24"><path d="M19 11h-1.7c0 .74-.16 1.43-.43 2.05l1.23 1.23c.56-.98.9-2.090.9-3.28zm-4.02.17c0-.06.02-.11.02-.17V5c0-1.66-1.34-3-3-3S9 3.34 9 5v.18l5.98 5.99zM4.27 3L3 4.27l6.01 6.01V11c0 1.66 1.33 3 2.99 3 .22 0 .44-.03.65-.08l1.66 1.66c-.71.33-1.5.52-2.31.52-2.76 0-5.3-2.1-5.3-5.1H5c0 3.41 2.72 6.230 6 6.72V21h2v-3.28c.91-.13 1.77-.45 2.54-.9L19.73 21 21 19.73 4.27 3z" fill="#fff"/></svg>
</div>
<svg style="left:1240px;top:660px" width="200" height="24"><text x="0" y="16" font-size="16.8" fill="#fff" stroke="#fff" stroke-width="0.55" textLength="175" lengthAdjust="spacingAndGlyphs">Кирило Романович...</text></svg>
<div class="a" style="left:1453px;top:542px;width:216px;height:155px;border-radius:10px;background:#3c4043;overflow:hidden">
<div class="a" style="left:75.5px;top:44.5px;width:65px;height:65px;border-radius:50%;background:#7e57c2;color:#fff;font-size:37px;line-height:65px;text-align:center">А</div>
<div class="a" style="left:168.5px;top:15px;width:33px;height:33px;border-radius:50%;background:#323538"></div><svg style="left:175px;top:21px" width="20" height="20" viewBox="0 0 24 24"><path d="M19 11h-1.7c0 .74-.16 1.43-.43 2.05l1.23 1.23c.56-.98.9-2.090.9-3.28zm-4.02.17c0-.06.02-.11.02-.17V5c0-1.66-1.34-3-3-3S9 3.34 9 5v.18l5.98 5.99zM4.27 3L3 4.27l6.01 6.01V11c0 1.66 1.33 3 2.99 3 .22 0 .44-.03.65-.08l1.66 1.66c-.71.33-1.5.52-2.31.52-2.76 0-5.3-2.1-5.3-5.1H5c0 3.41 2.72 6.230 6 6.72V21h2v-3.28c.91-.13 1.77-.45 2.54-.9L19.73 21 21 19.73 4.27 3z" fill="#fff"/></svg>
</div>
<svg style="left:1473px;top:660px" width="200" height="24"><text x="0" y="16" font-size="16.8" fill="#fff" stroke="#fff" stroke-width="0.55" textLength="169" lengthAdjust="spacingAndGlyphs">Анна Андріївна Че...</text></svg>
<div class="a" style="left:1684px;top:542px;width:216px;height:155px;border-radius:10px;background:#3c4043;overflow:hidden">
<svg style="left:75.5px;top:44.5px" width="65" height="65" viewBox="0 0 65 65"><defs><clipPath id="c8"><circle cx="32.5" cy="32.5" r="32.5"/></clipPath></defs><g clip-path="url(#c8)"><rect width="65" height="65" fill="#18221a"/><rect x="48" y="5" width="8" height="50" fill="#2a4a2a" opacity="0.7"/><circle cx="58" cy="40" r="3" fill="#e04030"/><path d="M15 34 Q12 10 34 8 Q54 10 53 34 Q54 44 46 42 L22 42 Q14 42 15 34Z" fill="#8a6a50"/><ellipse cx="30" cy="29" rx="10" ry="13.5" fill="#e0b0a0"/><path d="M33 18 Q46 18 50 34 L42 38 Q40 24 33 18Z" fill="#8a6a50"/><path d="M26 38 Q30 40 34 38" stroke="#d05050" stroke-width="1.8" fill="none"/><path d="M6 65 Q10 46 24 43 L40 43 Q56 46 60 65Z" fill="#f0ece8"/><path d="M22 44 L40 44 Q42 56 34 65 L26 65 Q20 56 22 44Z" fill="#e0a890"/></g></svg>
<div class="a" style="left:168.5px;top:15px;width:33px;height:33px;border-radius:50%;background:#323538"></div><svg style="left:175px;top:21px" width="20" height="20" viewBox="0 0 24 24"><path d="M19 11h-1.7c0 .74-.16 1.43-.43 2.05l1.23 1.23c.56-.98.9-2.090.9-3.28zm-4.02.17c0-.06.02-.11.02-.17V5c0-1.66-1.34-3-3-3S9 3.34 9 5v.18l5.98 5.99zM4.27 3L3 4.27l6.01 6.01V11c0 1.66 1.33 3 2.99 3 .22 0 .44-.03.65-.08l1.66 1.66c-.71.33-1.5.52-2.31.52-2.76 0-5.3-2.1-5.3-5.1H5c0 3.41 2.72 6.230 6 6.72V21h2v-3.28c.91-.13 1.77-.45 2.54-.9L19.73 21 21 19.73 4.27 3z" fill="#fff"/></svg>
</div>
<svg style="left:1704px;top:660px" width="200" height="24"><text x="0" y="16" font-size="16.8" fill="#fff" stroke="#fff" stroke-width="0.55" textLength="173" lengthAdjust="spacingAndGlyphs">Крістіна Русланівн...</text></svg>
<div class="a" style="left:1220px;top:712px;width:218px;height:155px;border-radius:10px;background:#3c4043;overflow:hidden">
<svg style="left:76.5px;top:44.5px" width="65" height="65" viewBox="0 0 65 65"><defs><clipPath id="c9"><circle cx="32.5" cy="32.5" r="32.5"/></clipPath></defs><g clip-path="url(#c9)"><rect width="65" height="65" fill="#c9c7c1"/><path d="M45 10 Q60 20 62 40 L55 58 L48 30Z" fill="#b8b6b0" opacity="0.6"/><path d="M12 50 Q8 22 28 12 Q46 10 48 30 Q50 44 52 52Z" fill="#a27b52"/><ellipse cx="34" cy="24" rx="9" ry="12.5" fill="#dcac8c"/><path d="M18 14 Q18 3 32 3 Q42 3 42 14 Q30 10 18 14Z" fill="#1a1414"/><path d="M2 65 Q6 46 22 42 L30 46 L38 42 Q54 46 58 65Z" fill="#1e1a1a"/><path d="M29 47 L34 58 L40 47" stroke="#c8a050" stroke-width="0.8" fill="none"/><rect x="33.3" y="56" width="1.6" height="6" fill="#c8a050"/><rect x="31.5" y="57.5" width="5" height="1.5" fill="#c8a050"/></g></svg>
<div class="a" style="left:170.5px;top:15px;width:33px;height:33px;border-radius:50%;background:#323538"></div><svg style="left:177px;top:21px" width="20" height="20" viewBox="0 0 24 24"><path d="M19 11h-1.7c0 .74-.16 1.43-.43 2.05l1.23 1.23c.56-.98.9-2.090.9-3.28zm-4.02.17c0-.06.02-.11.02-.17V5c0-1.66-1.34-3-3-3S9 3.34 9 5v.18l5.98 5.99zM4.27 3L3 4.27l6.01 6.01V11c0 1.66 1.33 3 2.99 3 .22 0 .44-.03.65-.08l1.66 1.66c-.71.33-1.5.52-2.31.52-2.76 0-5.3-2.1-5.3-5.1H5c0 3.41 2.72 6.230 6 6.72V21h2v-3.28c.91-.13 1.77-.45 2.54-.9L19.73 21 21 19.73 4.27 3z" fill="#fff"/></svg>
</div>
<svg style="left:1240px;top:830px" width="200" height="24"><text x="0" y="16" font-size="16.8" fill="#fff" stroke="#fff" stroke-width="0.55" textLength="175" lengthAdjust="spacingAndGlyphs">Дмитро Андрійови...</text></svg>
<div class="a" style="left:1453px;top:712px;width:216px;height:155px;border-radius:10px;background:#3c4043;overflow:hidden">
<div class="a" style="left:70.0px;top:38px;width:40px;height:40px;border-radius:50%;background:#7e57c2;color:#fff;font-size:22px;line-height:40px;text-align:center">О</div>
<div class="a" style="left:107.0px;top:37px;width:42px;height:42px;border-radius:50%;background:#9c7a6c;border:1px solid #3c4043;color:#fff;font-size:22px;line-height:40px;text-align:center">М</div>
</div>
<svg style="left:1453px;top:807px" width="216" height="26"><text x="108.0" y="18" font-size="16.8" fill="#fff" stroke="#fff" stroke-width="0.55" text-anchor="middle" textLength="108" lengthAdjust="spacingAndGlyphs">Ще 72 особи</text></svg>
<div class="a" style="left:1684px;top:712px;width:216px;height:155px;border-radius:10px;background:#3c4043;overflow:hidden">
<svg style="left:0;top:16px" width="216" height="123" viewBox="0 0 216 123"><defs><filter id="vb12"><feGaussianBlur stdDeviation="1.3"/></filter><radialGradient id="face12" cx="0.45" cy="0.45" r="0.6"><stop offset="0" stop-color="#d8d0c8"/><stop offset="0.7" stop-color="#b8aca4"/><stop offset="1" stop-color="#8a7e78"/></radialGradient></defs><g filter="url(#vb12)"><rect width="216" height="123" fill="#4a2414"/><rect x="118" y="0" width="98" height="123" fill="#3a1a0c"/><rect x="128" y="6" width="3" height="14" fill="#7a4a28"/><rect x="131" y="6" width="4" height="14" fill="#8a5a38"/><rect x="135" y="6" width="4" height="14" fill="#7a4a28"/><rect x="139" y="6" width="2" height="14" fill="#40200e"/><rect x="141" y="6" width="2" height="14" fill="#7a4a28"/><rect x="143" y="6" width="3" height="14" fill="#7a4a28"/><rect x="146" y="6" width="4" height="14" fill="#40200e"/><rect x="150" y="6" width="4" height="14" fill="#8a5a38"/><rect x="154" y="6" width="2" height="14" fill="#8a5a38"/><rect x="156" y="6" width="2" height="14" fill="#8a5a38"/><rect x="158" y="6" width="2" height="14" fill="#40200e"/><rect x="160" y="6" width="3" height="14" fill="#5a3018"/><rect x="163" y="6" width="3" height="14" fill="#5a3018"/><rect x="166" y="6" width="2" height="14" fill="#8a5a38"/><rect x="168" y="6" width="2" height="14" fill="#2a120a"/><rect x="170" y="6" width="4" height="14" fill="#7a4a28"/><rect x="174" y="6" width="4" height="14" fill="#40200e"/><rect x="178" y="6" width="2" height="14" fill="#2a120a"/><rect x="180" y="6" width="2" height="14" fill="#8a5a38"/><rect x="182" y="6" width="2" height="14" fill="#2a120a"/><rect x="184" y="6" width="3" height="14" fill="#40200e"/><rect x="187" y="6" width="2" height="14" fill="#40200e"/><rect x="189" y="6" width="2" height="14" fill="#8a5a38"/><rect x="191" y="6" width="3" height="14" fill="#8a5a38"/><rect x="194" y="6" width="4" height="14" fill="#5a3018"/><rect x="198" y="6" width="4" height="14" fill="#2a120a"/><rect x="202" y="6" width="4" height="14" fill="#5a3018"/><rect x="206" y="6" width="4" height="14" fill="#2a120a"/><rect x="210" y="6" width="3" height="14" fill="#8a5a38"/><rect x="213" y="6" width="3" height="14" fill="#8a5a38"/><rect x="128" y="24" width="3" height="14" fill="#40200e"/><rect x="131" y="24" width="4" height="14" fill="#40200e"/><rect x="135" y="24" width="4" height="14" fill="#2a120a"/><rect x="139" y="24" width="4" height="14" fill="#2a120a"/><rect x="143" y="24" width="2" height="14" fill="#7a4a28"/><rect x="145" y="24" width="3" height="14" fill="#7a4a28"/><rect x="148" y="24" width="4" height="14" fill="#40200e"/><rect x="152" y="24" width="4" height="14" fill="#7a4a28"/><rect x="156" y="24" width="2" height="14" fill="#7a4a28"/><rect x="158" y="24" width="2" height="14" fill="#7a4a28"/><rect x="160" y="24" width="3" height="14" fill="#7a4a28"/><rect x="163" y="24" width="4" height="14" fill="#8a5a38"/><rect x="167" y="24" width="4" height="14" fill="#5a3018"/><rect x="171" y="24" width="2" height="14" fill="#40200e"/><rect x="173" y="24" width="3" height="14" fill="#2a120a"/><rect x="176" y="24" width="4" height="14" fill="#2a120a"/><rect x="180" y="24" width="2" height="14" fill="#40200e"/><rect x="182" y="24" width="2" height="14" fill="#40200e"/><rect x="184" y="24" width="2" height="14" fill="#8a5a38"/><rect x="186" y="24" width="2" height="14" fill="#8a5a38"/><rect x="188" y="24" width="2" height="14" fill="#5a3018"/><rect x="190" y="24" width="2" height="14" fill="#7a4a28"/><rect x="192" y="24" width="2" height="14" fill="#40200e"/><rect x="194" y="24" width="3" height="14" fill="#40200e"/><rect x="197" y="24" width="3" height="14" fill="#8a5a38"/><rect x="200" y="24" width="4" height="14" fill="#2a120a"/><rect x="204" y="24" width="4" height="14" fill="#40200e"/><rect x="208" y="24" width="3" height="14" fill="#5a3018"/><rect x="211" y="24" width="3" height="14" fill="#7a4a28"/><rect x="128" y="42" width="3" height="14" fill="#40200e"/><rect x="131" y="42" width="4" height="14" fill="#40200e"/><rect x="135" y="42" width="2" height="14" fill="#5a3018"/><rect x="137" y="42" width="3" height="14" fill="#8a5a38"/><rect x="140" y="42" width="3" height="14" fill="#5a3018"/><rect x="143" y="42" width="2" height="14" fill="#5a3018"/><rect x="145" y="42" width="4" height="14" fill="#2a120a"/><rect x="149" y="42" width="3" height="14" fill="#7a4a28"/><rect x="152" y="42" width="2" height="14" fill="#5a3018"/><rect x="154" y="42" width="2" height="14" fill="#8a5a38"/><rect x="156" y="42" width="2" height="14" fill="#5a3018"/><rect x="158" y="42" width="4" height="14" fill="#2a120a"/><rect x="162" y="42" width="3" height="14" fill="#8a5a38"/><rect x="165" y="42" width="4" height="14" fill="#5a3018"/><rect x="169" y="42" width="2" height="14" fill="#7a4a28"/><rect x="171" y="42" width="4" height="14" fill="#7a4a28"/><rect x="175" y="42" width="4" height="14" fill="#2a120a"/><rect x="179" y="42" width="2" height="14" fill="#8a5a38"/><rect x="181" y="42" width="4" height="14" fill="#40200e"/><rect x="185" y="42" width="3" height="14" fill="#7a4a28"/><rect x="188" y="42" width="3" height="14" fill="#40200e"/><rect x="191" y="42" width="4" height="14" fill="#5a3018"/><rect x="195" y="42" width="3" height="14" fill="#7a4a28"/><rect x="198" y="42" width="4" height="14" fill="#2a120a"/><rect x="202" y="42" width="3" height="14" fill="#7a4a28"/><rect x="205" y="42" width="4" height="14" fill="#40200e"/><rect x="209" y="42" width="4" height="14" fill="#5a3018"/><rect x="213" y="42" width="4" height="14" fill="#7a4a28"/><rect x="128" y="60" width="4" height="14" fill="#7a4a28"/><rect x="132" y="60" width="2" height="14" fill="#2a120a"/><rect x="134" y="60" width="4" height="14" fill="#2a120a"/><rect x="138" y="60" width="2" height="14" fill="#8a5a38"/><rect x="140" y="60" width="3" height="14" fill="#40200e"/><rect x="143" y="60" width="2" height="14" fill="#5a3018"/><rect x="145" y="60" width="2" height="14" fill="#40200e"/><rect x="147" y="60" width="3" height="14" fill="#2a120a"/><rect x="150" y="60" width="4" height="14" fill="#8a5a38"/><rect x="154" y="60" width="4" height="14" fill="#7a4a28"/><rect x="158" y="60" width="2" height="14" fill="#40200e"/><rect x="160" y="60" width="3" height="14" fill="#8a5a38"/><rect x="163" y="60" width="2" height="14" fill="#40200e"/><rect x="165" y="60" width="2" height="14" fill="#8a5a38"/><rect x="167" y="60" width="4" height="14" fill="#7a4a28"/><rect x="171" y="60" width="3" height="14" fill="#40200e"/><rect x="174" y="60" width="4" height="14" fill="#5a3018"/><rect x="178" y="60" width="2" height="14" fill="#5a3018"/><rect x="180" y="60" width="2" height="14" fill="#2a120a"/><rect x="182" y="60" width="2" height="14" fill="#40200e"/><rect x="184" y="60" width="4" height="14" fill="#5a3018"/><rect x="188" y="60" width="3" height="14" fill="#2a120a"/><rect x="191" y="60" width="4" height="14" fill="#7a4a28"/><rect x="195" y="60" width="2" height="14" fill="#7a4a28"/><rect x="197" y="60" width="3" height="14" fill="#8a5a38"/><rect x="200" y="60" width="3" height="14" fill="#8a5a38"/><rect x="203" y="60" width="4" height="14" fill="#2a120a"/><rect x="207" y="60" width="2" height="14" fill="#8a5a38"/><rect x="209" y="60" width="4" height="14" fill="#40200e"/><rect x="213" y="60" width="4" height="14" fill="#5a3018"/><rect x="128" y="78" width="2" height="14" fill="#40200e"/><rect x="130" y="78" width="3" height="14" fill="#7a4a28"/><rect x="133" y="78" width="2" height="14" fill="#7a4a28"/><rect x="135" y="78" width="2" height="14" fill="#2a120a"/><rect x="137" y="78" width="4" height="14" fill="#7a4a28"/><rect x="141" y="78" width="3" height="14" fill="#5a3018"/><rect x="144" y="78" width="4" height="14" fill="#40200e"/><rect x="148" y="78" width="3" height="14" fill="#5a3018"/><rect x="151" y="78" width="2" height="14" fill="#5a3018"/><rect x="153" y="78" width="3" height="14" fill="#8a5a38"/><rect x="156" y="78" width="3" height="14" fill="#40200e"/><rect x="159" y="78" width="2" height="14" fill="#2a120a"/><rect x="161" y="78" width="4" height="14" fill="#8a5a38"/><rect x="165" y="78" width="3" height="14" fill="#40200e"/><rect x="168" y="78" width="2" height="14" fill="#7a4a28"/><rect x="170" y="78" width="2" height="14" fill="#5a3018"/><rect x="172" y="78" width="2" height="14" fill="#7a4a28"/><rect x="174" y="78" width="3" height="14" fill="#7a4a28"/><rect x="177" y="78" width="2" height="14" fill="#40200e"/><rect x="179" y="78" width="3" height="14" fill="#5a3018"/><rect x="182" y="78" width="4" height="14" fill="#5a3018"/><rect x="186" y="78" width="4" height="14" fill="#7a4a28"/><rect x="190" y="78" width="2" height="14" fill="#8a5a38"/><rect x="192" y="78" width="3" height="14" fill="#40200e"/><rect x="195" y="78" width="4" height="14" fill="#8a5a38"/><rect x="199" y="78" width="4" height="14" fill="#5a3018"/><rect x="203" y="78" width="3" height="14" fill="#40200e"/><rect x="206" y="78" width="2" height="14" fill="#5a3018"/><rect x="208" y="78" width="3" height="14" fill="#8a5a38"/><rect x="211" y="78" width="4" height="14" fill="#40200e"/><rect x="125" y="20" width="91" height="2" fill="#8a5a34"/><rect x="125" y="38" width="91" height="2" fill="#8a5a34"/><rect x="125" y="56" width="91" height="2" fill="#8a5a34"/><rect x="125" y="74" width="91" height="2" fill="#8a5a34"/><rect x="125" y="92" width="91" height="2" fill="#8a5a34"/><rect x="20" y="8" width="36" height="85" fill="#a0a890"/><rect x="37" y="8" width="2" height="85" fill="#d8d8c8"/><rect x="20" y="45" width="36" height="2" fill="#d8d8c8"/><path d="M0 0 H44 Q38 60 28 123 H0Z" fill="#7a161a"/><path d="M8 0 Q12 60 6 123" stroke="#a02a2a" stroke-width="3" fill="none"/><path d="M26 0 Q28 60 18 123" stroke="#5a1014" stroke-width="3" fill="none"/><path d="M170 123 L172 75 Q186 62 204 72 L206 123Z" fill="#b86a7a"/><circle cx="148" cy="38" r="3" fill="#f0d090"/><path d="M120 0 Q150 10 175 0" stroke="#c89060" stroke-width="2" fill="none" opacity="0.6"/><path d="M4 123 Q10 92 50 82 L128 80 Q162 86 170 123Z" fill="#28223a"/><path d="M54 48 Q50 12 66 1 L116 1 Q128 14 126 50 Q122 82 90 88 Q60 84 54 48Z" fill="url(#face12)"/><path d="M54 36 Q52 6 66 0 L74 0 Q60 12 60 44Z" fill="#7a7470"/><path d="M126 36 Q128 6 114 0 L106 0 Q120 12 120 44Z" fill="#7a7470"/><ellipse cx="76" cy="40" rx="8" ry="3" fill="#5a4a44"/><ellipse cx="104" cy="39" rx="8" ry="3" fill="#5a4a44"/><path d="M88 42 L84 62 L92 64Z" fill="#9a8e88"/><path d="M78 72 Q90 68 102 72" stroke="#7a5a58" stroke-width="2.5" fill="none"/><path d="M68 84 L90 96 L112 84 L108 123 L72 123Z" fill="#7890bc"/></g></svg>
<div class="a" style="left:168.5px;top:15px;width:33px;height:33px;border-radius:50%;background:rgba(0,0,0,0)"></div><svg style="left:175px;top:21px" width="20" height="20" viewBox="0 0 24 24"><path d="M19 11h-1.7c0 .74-.16 1.43-.43 2.05l1.23 1.23c.56-.98.9-2.090.9-3.28zm-4.02.17c0-.06.02-.11.02-.17V5c0-1.66-1.34-3-3-3S9 3.34 9 5v.18l5.98 5.99zM4.27 3L3 4.27l6.01 6.01V11c0 1.66 1.33 3 2.99 3 .22 0 .44-.03.65-.08l1.66 1.66c-.71.33-1.5.52-2.31.52-2.76 0-5.3-2.1-5.3-5.1H5c0 3.41 2.72 6.230 6 6.72V21h2v-3.28c.91-.13 1.77-.45 2.54-.9L19.73 21 21 19.73 4.27 3z" fill="#fff"/></svg>
</div>
<svg style="left:1704px;top:830px" width="200" height="24"><text x="0" y="16" font-size="16.8" fill="#fff" stroke="#fff" stroke-width="0.55" textLength="163" lengthAdjust="spacingAndGlyphs">Олександр Волод...</text></svg>
<div class="a" style="left:735px;top:881px;width:450px;height:50px;border-radius:25px;background:#2b2c2f"></div>
<svg style="left:743px;top:890px" width="32" height="32" viewBox="0 0 32 32"><path d="M16 29 C6 22 2.5 16 2.8 10.5 C3.2 5 9.5 1.8 16 7.5 C22.5 1.8 28.8 5 29.2 10.5 C29.5 16 26 22 16 29Z" fill="#ec5a9e"/><path d="M6 9 Q8 5.5 11.5 6.5" stroke="#f6a8cf" stroke-width="2" fill="none" stroke-linecap="round"/><path d="M12.5 13 Q13.3 18.2 17.5 19 Q13.3 19.8 12.5 25 Q11.7 19.8 7.5 19 Q11.7 18.2 12.5 13Z" fill="#fdd835"/><path d="M25 2.5 Q25.6 6.8 29 7.5 Q25.6 8.2 25 12.5 Q24.4 8.2 21 7.5 Q24.4 6.8 25 2.5Z" fill="#fdd835"/><circle cx="20" cy="11.5" r="1.1" fill="#fde68a"/><circle cx="23" cy="18" r="1.1" fill="#fde68a"/><circle cx="19.5" cy="22" r="0.9" fill="#fde68a"/></svg>
<svg style="left:793px;top:890px" width="32" height="32" viewBox="0 0 32 32"><path d="M4 15.5 Q4 13 7 13 L12.5 13 Q16 10 16.5 6 L17.5 2.5 Q20.5 1.5 21.5 4.5 Q22 9 20 13 L26.5 13 Q30 13.5 29.5 17 L29 20 Q30 22 28.5 24 Q29 27 26.5 28.5 Q26 30.5 22.5 30.5 L12 30.5 Q8.5 30 7 28.5 L4.5 26Z" fill="#fcc21b"/><path d="M20 13.5 Q17.5 17 18.5 19 M20 19 H28.5 M20 23.5 H28 M19.5 27.5 H26.5" stroke="#e59600" stroke-width="1.2" fill="none"/></svg>
<svg style="left:843px;top:890px" width="32" height="32" viewBox="0 0 32 32"><path d="M2.5 30 L9 13.5 Q12 16 15 19 Q17.5 21 19.5 24Z" fill="#fbc02d"/><path d="M4.5 25 L7 19 L13.5 24.5 Z" fill="#f57f17" opacity="0.6"/><path d="M9 13.5 Q14 14 19.5 24 Q15 22 9 13.5Z" fill="#6d4c41"/><path d="M15 12 Q13 9 15.5 5.5 Q18 2.5 20 4.5 Q21 6.5 18.5 8 Q16.5 8.5 16.5 6.5" stroke="#e53935" stroke-width="1.8" fill="none" stroke-linecap="round"/><path d="M17 14 Q20 12 21 9 Q22 6 25 7 Q27 8 25.5 10.5 Q24 13 26.5 14 Q28.5 14.5 28 12" stroke="#f48fb1" stroke-width="1.8" fill="none" stroke-linecap="round"/><path d="M18 19.5 Q22 21 24 18.5 Q26 16 28.5 17.5" stroke="#29b6f6" stroke-width="1.9" fill="none" stroke-linecap="round"/><circle cx="10" cy="4" r="1" fill="#29b6f6"/><circle cx="7.5" cy="9" r="1" fill="#fbc02d"/><circle cx="11" cy="10" r="0.9" fill="#fbc02d"/><circle cx="22" cy="2.5" r="0.9" fill="#fbc02d"/><circle cx="27.5" cy="23" r="1" fill="#ff7043"/><circle cx="23.5" cy="26.5" r="0.9" fill="#e53935"/><circle cx="28" cy="27.5" r="0.9" fill="#f48fb1"/></svg>
<svg style="left:893px;top:890px" width="32" height="32" viewBox="0 0 32 32"><path d="M7 14 Q5 10 8 9 L14 6 Q17 4.5 18 7 L20 5.5 Q23 4 24 6.5 L26.5 9 Q29.5 12 29 18 Q28.5 24 24 27.5 Q19 31 14 28.5 Q9.5 26 8 21Z" fill="#f6b919"/><path d="M6.5 15 Q5 11.5 8 10.5 L15 8 Q18 7 18.5 10 L21 9 Q24 8.5 24.5 11.5 L25 17 Q25.5 24 20 27.5 Q15 30 11 27 Q7.5 24 7 19Z" fill="#fcc21b"/><path d="M9.5 12 L17 10 M10 16 L19 13 M11 20 L20 16.5" stroke="#e59600" stroke-width="1" fill="none" opacity="0.7"/><path d="M23.5 -0.5 L25 3 M27 -0.5 L27.5 3.5 M30.5 2 L28.5 4.5" stroke="#b0b5b5" stroke-width="1.1" stroke-linecap="round"/><path d="M2 18 L5.5 19.5 M1.5 22 L5.5 22.5 M3 26.5 L6 24.5" stroke="#b0b5b5" stroke-width="1.1" stroke-linecap="round"/></svg>
<svg style="left:943px;top:890px" width="32" height="32" viewBox="0 0 32 32"><defs><radialGradient id="fg1" cx="0.45" cy="0.4" r="0.6"><stop offset="0" stop-color="#fde060"/><stop offset="0.75" stop-color="#fcc21b"/><stop offset="1" stop-color="#f5a416"/></radialGradient></defs><circle cx="16" cy="16" r="14" fill="url(#fg1)"/><path d="M7.5 17 Q16 19.5 24.5 17 Q23.5 26.5 16 26.5 Q8.5 26.5 7.5 17Z" fill="#3e2723"/><path d="M8.5 17.8 Q16 20.3 23.5 17.8 L23.2 19.6 Q16 22 8.8 19.6Z" fill="#fff"/><path d="M12 24.5 Q16 22.5 20 24.5 Q18 26.5 16 26.5 Q14 26.5 12 24.5Z" fill="#f48fb1"/><path d="M8 12.5 Q10.5 9 13 12.5 M19 12.5 Q21.5 9 24 12.5" stroke="#3e2723" stroke-width="1.6" fill="none" stroke-linecap="round"/><path d="M5 15 Q1.5 19 2.5 22 Q4.5 24.5 7 22.5 Q8.5 20 5 15Z" fill="#42a5f5"/><path d="M27 15 Q30.5 19 29.5 22 Q27.5 24.5 25 22.5 Q23.5 20 27 15Z" fill="#42a5f5"/></svg>
<svg style="left:993px;top:890px" width="32" height="32" viewBox="0 0 32 32"><defs><radialGradient id="fg2" cx="0.45" cy="0.4" r="0.6"><stop offset="0" stop-color="#fde060"/><stop offset="0.75" stop-color="#fcc21b"/><stop offset="1" stop-color="#f5a416"/></radialGradient></defs><circle cx="16" cy="16" r="14" fill="url(#fg2)"/><ellipse cx="10.8" cy="12" rx="1.6" ry="1.9" fill="#3e2723"/><ellipse cx="21.2" cy="12" rx="1.6" ry="1.9" fill="#3e2723"/><ellipse cx="16" cy="21" rx="3.6" ry="3" fill="#3e2723"/></svg>
<svg style="left:1043px;top:890px" width="32" height="32" viewBox="0 0 32 32"><defs><radialGradient id="fg3" cx="0.45" cy="0.4" r="0.6"><stop offset="0" stop-color="#fde060"/><stop offset="0.75" stop-color="#fcc21b"/><stop offset="1" stop-color="#f5a416"/></radialGradient></defs><circle cx="16" cy="16" r="14" fill="url(#fg3)"/><ellipse cx="11" cy="13" rx="1.5" ry="1.8" fill="#3e2723"/><ellipse cx="21" cy="13" rx="1.5" ry="1.8" fill="#3e2723"/><path d="M8 9 Q10 7 12 7.5 M20 7.5 Q22 7 24 9" stroke="#3e2723" stroke-width="1.1" fill="none" stroke-linecap="round"/><path d="M11.5 22 Q16 17.5 20.5 22" stroke="#3e2723" stroke-width="1.7" fill="none" stroke-linecap="round"/><path d="M7 16 Q4.5 21 5 23.5 Q6.5 26 9 24 Q10 22 7 16Z" fill="#42a5f5"/></svg>
<svg style="left:1093px;top:890px" width="32" height="32" viewBox="0 0 32 32"><defs><radialGradient id="fg4" cx="0.45" cy="0.4" r="0.6"><stop offset="0" stop-color="#fde060"/><stop offset="0.75" stop-color="#fcc21b"/><stop offset="1" stop-color="#f5a416"/></radialGradient></defs><circle cx="17.5" cy="15" r="13.5" fill="url(#fg4)"/><ellipse cx="13" cy="11" rx="1.5" ry="1.8" fill="#3e2723"/><ellipse cx="22" cy="10.5" rx="1.5" ry="1.8" fill="#3e2723"/><path d="M10.5 5.5 Q13 3.5 15 5 M19.5 6 Q22.5 4 25 7" stroke="#3e2723" stroke-width="1.3" fill="none" stroke-linecap="round"/><path d="M14 19.5 Q17.5 17.5 21 19.5" stroke="#3e2723" stroke-width="1.6" fill="none" stroke-linecap="round"/><path d="M2 23 Q1.5 20.5 4 21 L9 22.5 Q14 21 17 20.5 Q19 20.5 18.5 22.5 L13.5 24.5 Q12 27 12.5 29 Q10 31.5 6.5 30 Q3 28 2 23Z" fill="#fbc02d" stroke="#e59600" stroke-width="0.6"/></svg>
<svg style="left:1143px;top:890px" width="32" height="32" viewBox="0 0 32 32"><g transform="translate(0 32) scale(1 -1)"><path d="M4 15.5 Q4 13 7 13 L12.5 13 Q16 10 16.5 6 L17.5 2.5 Q20.5 1.5 21.5 4.5 Q22 9 20 13 L26.5 13 Q30 13.5 29.5 17 L29 20 Q30 22 28.5 24 Q29 27 26.5 28.5 Q26 30.5 22.5 30.5 L12 30.5 Q8.5 30 7 28.5 L4.5 26Z" fill="#fcc21b"/><path d="M20 13.5 Q17.5 17 18.5 19 M20 19 H28.5 M20 23.5 H28 M19.5 27.5 H26.5" stroke="#e59600" stroke-width="1.2" fill="none"/></g></svg>
<svg style="left:30px;top:966px" width="60" height="30"><text x="0.5" y="21" font-size="19.6" fill="#fff" stroke="#fff" stroke-width="0.35" textLength="48" lengthAdjust="spacingAndGlyphs">12:08</text></svg>
<div class="a" style="left:95px;top:971px;width:1px;height:20px;background:#c4c7c5"></div>
<svg style="left:111px;top:966px" width="520" height="30"><text x="0" y="21" font-size="19.6" fill="#fff" stroke="#fff" stroke-width="0.6" textLength="488" lengthAdjust="spacingAndGlyphs">Київські філософські студії - 2024. Пленарне засі...</text></svg>
<div class="a" style="left:665px;top:956px;width:83px;height:50px;border-radius:25px;background:#2f3134"></div>
<div class="a" style="left:698px;top:956px;width:50px;height:50px;border-radius:25px;background:#ea4335"></div>
<svg style="left:710px;top:968px" width="26" height="26" viewBox="0 0 24 24"><path d="M19 11h-1.7c0 .74-.16 1.43-.43 2.05l1.23 1.23c.56-.98.9-2.09.9-3.28zm-4.02.17c0-.06.02-.11.02-.17V5c0-1.66-1.34-3-3-3S9 3.34 9 5v.18l5.98 5.99zM4.27 3L3 4.27l6.01 6.01V11c0 1.66 1.33 3 2.99 3 .22 0 .44-.03.65-.08l1.66 1.66c-.71.33-1.5.52-2.31.52-2.76 0-5.3-2.1-5.3-5.1H5c0 3.41 2.72 6.23 6 6.72V21h2v-3.28c.91-.13 1.77-.45 2.54-.9L19.73 21 21 19.73 4.27 3z" fill="#fff"/></svg>
<svg style="left:676px;top:972px" width="16" height="16"><path d="M2 11 L8 5 L14 11" fill="none" stroke="#9aa0a6" stroke-width="2"/></svg>
<div class="a" style="left:763px;top:956px;width:83px;height:50px;border-radius:25px;background:#2f3134"></div>
<div class="a" style="left:795px;top:956px;width:50px;height:50px;border-radius:25px;background:#3c4043"></div>
<svg style="left:774px;top:972px" width="16" height="16"><path d="M2 11 L8 5 L14 11" fill="none" stroke="#9aa0a6" stroke-width="2"/></svg>
<svg style="left:806px;top:968px" width="28" height="26"><rect x="4.2" y="5.3" width="16" height="15.5" rx="1.5" fill="none" stroke="#fff" stroke-width="2.3"/><path d="M20 10 L25 6.5 V19.5 L20 16Z" fill="#fff"/></svg>
<div class="a" style="left:860px;top:956px;width:50px;height:50px;border-radius:25px;background:#3c4043"></div>
<div class="a" style="left:925px;top:956px;width:50px;height:50px;border-radius:25px;background:#8ab4f8"></div>
<div class="a" style="left:990px;top:956px;width:50px;height:50px;border-radius:25px;background:#3c4043"></div>
<div class="a" style="left:1055px;top:956px;width:50px;height:50px;border-radius:25px;background:#3c4043"></div>
<div class="a" style="left:1120px;top:956px;width:50px;height:50px;border-radius:25px;background:#3c4043"></div>
<svg style="left:871px;top:968px" width="28" height="26"><rect x="3.5" y="4" width="21" height="18" rx="1" fill="none" stroke="#fff" stroke-width="2.4"/><path d="M12.3 10 H8.3 V16 H12.3 M19.7 10 H15.7 V16 H19.7" fill="none" stroke="#fff" stroke-width="2.6"/></svg>
<svg style="left:937px;top:967px" width="26" height="26"><circle cx="13" cy="13" r="12.5" fill="#202124"/><circle cx="8.8" cy="10" r="2" fill="#8ab4f8"/><circle cx="17.2" cy="10" r="2" fill="#8ab4f8"/><path d="M6.5 15 H19.5 Q18.5 20.5 13 20.5 Q7.5 20.5 6.5 15Z" fill="#8ab4f8"/></svg>
<svg style="left:1000px;top:967px" width="30" height="28"><rect x="2.5" y="3.5" width="25" height="21" rx="1" fill="none" stroke="#fff" stroke-width="2.4"/><path d="M15 8 L10 13 H13.3 V19 H16.7 V13 H20Z" fill="#fff"/></svg>
<svg style="left:1066px;top:965px" width="28" height="30" viewBox="0 0 28 30"><path d="M8 15 V6.5 Q8 4.5 10 4.5 Q12 4.5 12 6.5 V13 V4 Q12 2 14 2 Q16 2 16 4 V13 V5 Q16 3 18 3 Q20 3 20 5 V14 V9 Q20 7 22 7 Q24 7 24 9 V18 Q24 27 15 27 Q10 27 7 22 L3 16 Q2 14 4 13.5 Q6 13 8 15Z" fill="none" stroke="#fff" stroke-width="2.1" stroke-linejoin="round"/></svg>
<svg style="left:1139px;top:967px" width="12" height="28"><circle cx="6" cy="5" r="2.6" fill="#fff"/><circle cx="6" cy="14" r="2.6" fill="#fff"/><circle cx="6" cy="23" r="2.6" fill="#fff"/></svg>
<div class="a" style="left:1185px;top:956px;width:70px;height:50px;border-radius:25px;background:#ea4335"></div>
<svg style="left:1203px;top:972px" width="34" height="18" viewBox="0 0 34 18"><path d="M2 9 Q17 -1 32 9 L29.5 14.5 L23 12 V8.5 Q17 6.5 11 8.5 V12 L4.5 14.5Z" fill="#fff" stroke="#fff" stroke-width="1.2" stroke-linejoin="round"/></svg>
<svg style="left:1682px;top:968px" width="26" height="26"><circle cx="13" cy="13" r="11.5" fill="none" stroke="#fff" stroke-width="2.3"/><rect x="11.6" y="11" width="2.8" height="8" fill="#fff"/><circle cx="13" cy="7.6" r="1.7" fill="#fff"/></svg>
<svg style="left:1740px;top:967px" width="30" height="26"><circle cx="11.5" cy="9" r="3.9" fill="none" stroke="#fff" stroke-width="2.8"/><path d="M16.5 4.2 Q21.5 4 21.5 9 Q21.5 14 16.5 13.8 Q18.6 11.8 18.6 9 Q18.6 6.2 16.5 4.2Z" fill="#fff"/><path d="M2.2 22.6 Q2 15.8 11.5 15.8 Q21 15.8 20.8 22.6Z" fill="none" stroke="#fff" stroke-width="2.8" stroke-linejoin="round"/><path d="M19.5 15 Q28.5 15.5 28.5 24 H22.5 Q22.5 18 19.5 15Z" fill="#fff"/></svg>
<svg style="left:1801px;top:967px" width="28" height="28"><path d="M3 3 H25 V20 H8 L3 25Z" fill="none" stroke="#fff" stroke-width="2.7" stroke-linejoin="round"/><rect x="7" y="7" width="15" height="2.4" fill="#fff"/><rect x="7" y="11" width="15" height="2.4" fill="#fff"/><rect x="7" y="15" width="11" height="2.4" fill="#fff"/></svg>
<svg style="left:1862px;top:967px" width="28" height="28"><path d="M13.5 3 L18.5 11 H8.5Z" fill="none" stroke="#fff" stroke-width="2.7" stroke-linejoin="round"/><rect x="3" y="15" width="8" height="8" fill="none" stroke="#fff" stroke-width="2.7"/><circle cx="20" cy="19" r="4.2" fill="none" stroke="#fff" stroke-width="2.7"/></svg>
<div class="a" style="left:1756px;top:940px;width:36px;height:25px;border-radius:12.5px;background:#5f6368;color:#fff;font-size:14.5px;font-weight:bold;line-height:25px;text-align:center">84</div>
<div class="a" style="left:0;top:1030px;width:1920px;height:50px;background:#1e322e"></div>
<svg style="left:20px;top:1045px" width="21" height="21" viewBox="0 0 21 21"><path d="M0 2.8 L8.6 1.6 V9.9 H0Z M9.6 1.5 L21 0 V9.9 H9.6Z M0 10.9 H8.6 V19.2 L0 18Z M9.6 10.9 H21 V21 L9.6 19.4Z" fill="#fff"/></svg>
<svg style="left:79px;top:1044px" width="24" height="24"><circle cx="13.5" cy="9.5" r="7" fill="none" stroke="#fff" stroke-width="1.6"/><path d="M8.5 14.5 L2 21" stroke="#fff" stroke-width="1.8"/></svg>
<svg style="left:134px;top:1040px" width="30" height="30" viewBox="0 0 30 30"><ellipse cx="15" cy="15" rx="14" ry="14.5" fill="#e0142b"/><ellipse cx="15" cy="15" rx="6" ry="10" fill="#1e322e"/><ellipse cx="15" cy="15" rx="8" ry="11.5" fill="none" stroke="#ff4b55" stroke-width="1.5" opacity="0.5"/></svg>
<svg style="left:189px;top:1044px" width="22" height="24" viewBox="0 0 22 24"><path d="M1 2 L8 0 V22 L1 24Z" fill="#e8c25a"/><path d="M5 4 H21 V21 H5Z" fill="#f6d675"/><path d="M1 2 L8 0 V22 L1 24Z" fill="#d9a93a"/></svg>
<svg style="left:0;top:0;width:1px;height:1px"><text x="220" y="1061" font-size="16" font-weight="normal" fill="#fff" text-anchor="start" textLength="54" lengthAdjust="spacingAndGlyphs">Конфе...</text></svg>
<div class="a" style="left:181px;top:1077px;width:104px;height:3px;background:#76b9ed"></div>
<div class="a" style="left:291px;top:1077px;width:113px;height:3px;background:#76b9ed"></div>
<div class="a" style="left:410px;top:1077px;width:103px;height:3px;background:#76b9ed"></div>
<div class="a" style="left:523px;top:1077px;width:102px;height:3px;background:#76b9ed"></div>
<div class="a" style="left:635px;top:1077px;width:103px;height:3px;background:#76b9ed"></div>
<div class="a" style="left:748px;top:1077px;width:102px;height:3px;background:#76b9ed"></div>
<div class="a" style="left:860px;top:1077px;width:103px;height:3px;background:#76b9ed"></div>
<div class="a" style="left:973px;top:1077px;width:103px;height:3px;background:#76b9ed"></div>
<div class="a" style="left:1086px;top:1077px;width:103px;height:3px;background:#76b9ed"></div>
<div class="a" style="left:1199px;top:1077px;width:102px;height:3px;background:#76b9ed"></div>
<div class="a" style="left:1311px;top:1077px;width:103px;height:3px;background:#76b9ed"></div>
<div class="a" style="left:291px;top:1030px;width:113px;height:47px;background:#4f605c"></div>
<svg style="left:299px;top:1039px" width="34" height="34" viewBox="0 0 34 34"><circle cx="15" cy="15" r="13" fill="#db4437"/><path d="M15 15 L28 15 A13 13 0 0 1 8.5 26.3Z" fill="#f4c20d"/><path d="M15 15 L8.5 26.3 A13 13 0 0 1 3.7 8.5 Z" fill="#0f9d58"/><circle cx="15" cy="15" r="6" fill="#fff"/><circle cx="15" cy="15" r="4.6" fill="#4285f4"/><circle cx="23" cy="24" r="8" fill="#2e6b1f"/><text x="23" y="29" font-size="11" fill="#c8e6c9" text-anchor="middle" font-family="Liberation Sans">0</text></svg>
<svg style="left:0;top:0;width:1px;height:1px"><text x="334" y="1061" font-size="16" font-weight="normal" fill="#fff" text-anchor="start" textLength="56" lengthAdjust="spacingAndGlyphs">Meet: "...</text></svg>
<svg style="left:415.0px;top:1043px" width="24" height="24" viewBox="0 0 24 24"><path d="M9 2 H23 V22 H9Z" fill="#fff"/><path d="M9 2 H23 V22 H9Z" fill="none" stroke="#2b579a" stroke-width="1.2"/><g fill="#2b579a"><rect x="13" y="6" width="8" height="1.6"/><rect x="13" y="9.5" width="8" height="1.6"/><rect x="13" y="13" width="8" height="1.6"/><rect x="13" y="16.5" width="8" height="1.6"/></g><path d="M0 4 L13 2 V22 L0 20Z" fill="#2b579a"/><text x="6.3" y="15.5" font-size="9.5" font-weight="bold" fill="#fff" text-anchor="middle" font-family="Liberation Sans">W</text></svg>
<svg style="left:0;top:0;width:1px;height:1px"><text x="448.5" y="1061" font-size="16" font-weight="normal" fill="#fff" text-anchor="start" textLength="53.0" lengthAdjust="spacingAndGlyphs">Марти...</text></svg>
<svg style="left:527.6px;top:1043px" width="24" height="24" viewBox="0 0 24 24"><path d="M9 2 H23 V22 H9Z" fill="#fff"/><path d="M9 2 H23 V22 H9Z" fill="none" stroke="#2b579a" stroke-width="1.2"/><g fill="#2b579a"><rect x="13" y="6" width="8" height="1.6"/><rect x="13" y="9.5" width="8" height="1.6"/><rect x="13" y="13" width="8" height="1.6"/><rect x="13" y="16.5" width="8" height="1.6"/></g><path d="M0 4 L13 2 V22 L0 20Z" fill="#2b579a"/><text x="6.3" y="15.5" font-size="9.5" font-weight="bold" fill="#fff" text-anchor="middle" font-family="Liberation Sans">W</text></svg>
<svg style="left:0;top:0;width:1px;height:1px"><text x="561" y="1061" font-size="16" font-weight="normal" fill="#fff" text-anchor="start" textLength="55.5" lengthAdjust="spacingAndGlyphs">Bioethi...</text></svg>
<svg style="left:640.2px;top:1043px" width="24" height="24" viewBox="0 0 24 24"><path d="M9 2 H23 V22 H9Z" fill="#fff"/><path d="M9 2 H23 V22 H9Z" fill="none" stroke="#2b579a" stroke-width="1.2"/><g fill="#2b579a"><rect x="13" y="6" width="8" height="1.6"/><rect x="13" y="9.5" width="8" height="1.6"/><rect x="13" y="13" width="8" height="1.6"/><rect x="13" y="16.5" width="8" height="1.6"/></g><path d="M0 4 L13 2 V22 L0 20Z" fill="#2b579a"/><text x="6.3" y="15.5" font-size="9.5" font-weight="bold" fill="#fff" text-anchor="middle" font-family="Liberation Sans">W</text></svg>
<svg style="left:0;top:0;width:1px;height:1px"><text x="673" y="1061" font-size="16" font-weight="normal" fill="#fff" text-anchor="start" textLength="60.5" lengthAdjust="spacingAndGlyphs">Інформ...</text></svg>
<svg style="left:752.8px;top:1043px" width="24" height="24" viewBox="0 0 24 24"><path d="M9 2 H23 V22 H9Z" fill="#fff"/><path d="M9 2 H23 V22 H9Z" fill="none" stroke="#2b579a" stroke-width="1.2"/><g fill="#2b579a"><rect x="13" y="6" width="8" height="1.6"/><rect x="13" y="9.5" width="8" height="1.6"/><rect x="13" y="13" width="8" height="1.6"/><rect x="13" y="16.5" width="8" height="1.6"/></g><path d="M0 4 L13 2 V22 L0 20Z" fill="#2b579a"/><text x="6.3" y="15.5" font-size="9.5" font-weight="bold" fill="#fff" text-anchor="middle" font-family="Liberation Sans">W</text></svg>
<svg style="left:0;top:0;width:1px;height:1px"><text x="786" y="1061" font-size="16" font-weight="normal" fill="#fff" text-anchor="start" textLength="57" lengthAdjust="spacingAndGlyphs">ENG_Bi...</text></svg>
<svg style="left:865.4px;top:1043px" width="24" height="24" viewBox="0 0 24 24"><path d="M9 2 H23 V22 H9Z" fill="#fff"/><path d="M9 2 H23 V22 H9Z" fill="none" stroke="#2b579a" stroke-width="1.2"/><g fill="#2b579a"><rect x="13" y="6" width="8" height="1.6"/><rect x="13" y="9.5" width="8" height="1.6"/><rect x="13" y="13" width="8" height="1.6"/><rect x="13" y="16.5" width="8" height="1.6"/></g><path d="M0 4 L13 2 V22 L0 20Z" fill="#2b579a"/><text x="6.3" y="15.5" font-size="9.5" font-weight="bold" fill="#fff" text-anchor="middle" font-family="Liberation Sans">W</text></svg>
<svg style="left:0;top:0;width:1px;height:1px"><text x="899" y="1061" font-size="16" font-weight="normal" fill="#fff" text-anchor="start" textLength="58.5" lengthAdjust="spacingAndGlyphs">Horban...</text></svg>
<svg style="left:978.0px;top:1043px" width="24" height="24" viewBox="0 0 24 24"><path d="M9 2 H23 V22 H9Z" fill="#fff"/><path d="M9 2 H23 V22 H9Z" fill="none" stroke="#2b579a" stroke-width="1.2"/><g fill="#2b579a"><rect x="13" y="6" width="8" height="1.6"/><rect x="13" y="9.5" width="8" height="1.6"/><rect x="13" y="13" width="8" height="1.6"/><rect x="13" y="16.5" width="8" height="1.6"/></g><path d="M0 4 L13 2 V22 L0 20Z" fill="#2b579a"/><text x="6.3" y="15.5" font-size="9.5" font-weight="bold" fill="#fff" text-anchor="middle" font-family="Liberation Sans">W</text></svg>
<svg style="left:0;top:0;width:1px;height:1px"><text x="1011" y="1061" font-size="16" font-weight="normal" fill="#fff" text-anchor="start" textLength="58" lengthAdjust="spacingAndGlyphs">ENG_1_...</text></svg>
<svg style="left:1090.6px;top:1043px" width="24" height="24" viewBox="0 0 24 24"><path d="M9 2 H23 V22 H9Z" fill="#fff"/><path d="M9 2 H23 V22 H9Z" fill="none" stroke="#2b579a" stroke-width="1.2"/><g fill="#2b579a"><rect x="13" y="6" width="8" height="1.6"/><rect x="13" y="9.5" width="8" height="1.6"/><rect x="13" y="13" width="8" height="1.6"/><rect x="13" y="16.5" width="8" height="1.6"/></g><path d="M0 4 L13 2 V22 L0 20Z" fill="#2b579a"/><text x="6.3" y="15.5" font-size="9.5" font-weight="bold" fill="#fff" text-anchor="middle" font-family="Liberation Sans">W</text></svg>
<svg style="left:0;top:0;width:1px;height:1px"><text x="1124" y="1061" font-size="16" font-weight="normal" fill="#fff" text-anchor="start" textLength="61" lengthAdjust="spacingAndGlyphs">Програ...</text></svg>
<svg style="left:1203.2px;top:1043px" width="24" height="24" viewBox="0 0 24 24"><path d="M9 2 H23 V22 H9Z" fill="#fff"/><path d="M9 2 H23 V22 H9Z" fill="none" stroke="#2b579a" stroke-width="1.2"/><g fill="#2b579a"><rect x="13" y="6" width="8" height="1.6"/><rect x="13" y="9.5" width="8" height="1.6"/><rect x="13" y="13" width="8" height="1.6"/><rect x="13" y="16.5" width="8" height="1.6"/></g><path d="M0 4 L13 2 V22 L0 20Z" fill="#2b579a"/><text x="6.3" y="15.5" font-size="9.5" font-weight="bold" fill="#fff" text-anchor="middle" font-family="Liberation Sans">W</text></svg>
<svg style="left:0;top:0;width:1px;height:1px"><text x="1236.5" y="1061" font-size="16" font-weight="normal" fill="#fff" text-anchor="start" textLength="57.5" lengthAdjust="spacingAndGlyphs">Додатк...</text></svg>
<svg style="left:1315.8px;top:1043px" width="24" height="24" viewBox="0 0 24 24"><path d="M9 2 H23 V22 H9Z" fill="#fff"/><path d="M9 2 H23 V22 H9Z" fill="none" stroke="#2b579a" stroke-width="1.2"/><g fill="#2b579a"><rect x="13" y="6" width="8" height="1.6"/><rect x="13" y="9.5" width="8" height="1.6"/><rect x="13" y="13" width="8" height="1.6"/><rect x="13" y="16.5" width="8" height="1.6"/></g><path d="M0 4 L13 2 V22 L0 20Z" fill="#2b579a"/><text x="6.3" y="15.5" font-size="9.5" font-weight="bold" fill="#fff" text-anchor="middle" font-family="Liberation Sans">W</text></svg>
<svg style="left:0;top:0;width:1px;height:1px"><text x="1349" y="1061" font-size="16" font-weight="normal" fill="#fff" text-anchor="start" textLength="60" lengthAdjust="spacingAndGlyphs">Скріни ...</text></svg>
<div class="a" style="left:1453px;top:1042px;width:25px;height:25px;border-radius:50%;background:radial-gradient(circle at 35% 30%,#fbd24a 0,#f5a020 50%,#ea6a10 100%)"></div>
<svg style="left:0;top:0;width:1px;height:1px"><text x="1492.5" y="1062" font-size="17.5" font-weight="normal" fill="#fff" text-anchor="start" textLength="35.5" lengthAdjust="spacingAndGlyphs">15°C</text></svg>
<svg style="left:1549px;top:1044px" width="200" height="24"><path d="M1 15 L8 8 L15 15" fill="none" stroke="#fff" stroke-width="1.3"/><rect x="33" y="7" width="10" height="9" rx="1" fill="none" stroke="#fff" stroke-width="1.2"/><path d="M43 10 L47 8 V15 L43 13" fill="none" stroke="#fff" stroke-width="1.2"/><path d="M31 5 Q38 1 45 5 M31 19 Q38 22 45 19" fill="none" stroke="#fff" stroke-width="1" opacity="0.7"/><rect x="64" y="1" width="7" height="14" rx="3.5" fill="#fff"/><path d="M61 12 Q61 18 67.5 18 Q74 18 74 12 M67.5 18 V22 M64 22 H71" fill="none" stroke="#fff" stroke-width="1.2"/><path d="M93 20 Q93 9 104 9 M96 20 Q96 12 104 12 M99 20 Q99 15 104 15" fill="none" stroke="#fff" stroke-width="1.2" opacity="0.8"/><circle cx="104" cy="19.5" r="1.6" fill="#fff"/><path d="M120 11 V7 M124 11 V7 M118 11 H126 V13 Q126 15 122 15 Q118 15 118 13Z" fill="#fff" stroke="#fff" stroke-width="0.8"/><rect x="124" y="9" width="14" height="9" fill="#fff"/><rect x="138" y="11" width="2" height="5" fill="#fff"/><path d="M150 9 H153 L158 5 V19 L153 15 H150Z" fill="none" stroke="#fff" stroke-width="1.2"/><path d="M161 9 Q163 12 161 15 M164 6 Q168 12 164 18 M167 3 Q172 12 167 21" fill="none" stroke="#fff" stroke-width="1.2"/></svg>
<svg style="left:0;top:0;width:1px;height:1px"><text x="1732" y="1061" font-size="16" font-weight="normal" fill="#fff" text-anchor="start" textLength="26" lengthAdjust="spacingAndGlyphs">УКР</text></svg>
<svg style="left:0;top:0;width:1px;height:1px"><text x="1793.7" y="1049" font-size="16" font-weight="normal" fill="#fff" text-anchor="start" textLength="34" lengthAdjust="spacingAndGlyphs">12:08</text></svg>
<svg style="left:0;top:0;width:1px;height:1px"><text x="1777" y="1071.5" font-size="16" font-weight="normal" fill="#fff" text-anchor="start" textLength="68.5" lengthAdjust="spacingAndGlyphs">17.05.2024</text></svg>
<svg style="left:1868px;top:1044px" width="24" height="24"><path d="M1.5 2.5 H21.5 V17.5 H14 L11 20.5 L8 17.5 H1.5Z" fill="none" stroke="#fff" stroke-width="1.3"/></svg>
<div class="a" style="left:1914px;top:1030px;width:1px;height:50px;background:#5a6664"></div>

</body></html>
